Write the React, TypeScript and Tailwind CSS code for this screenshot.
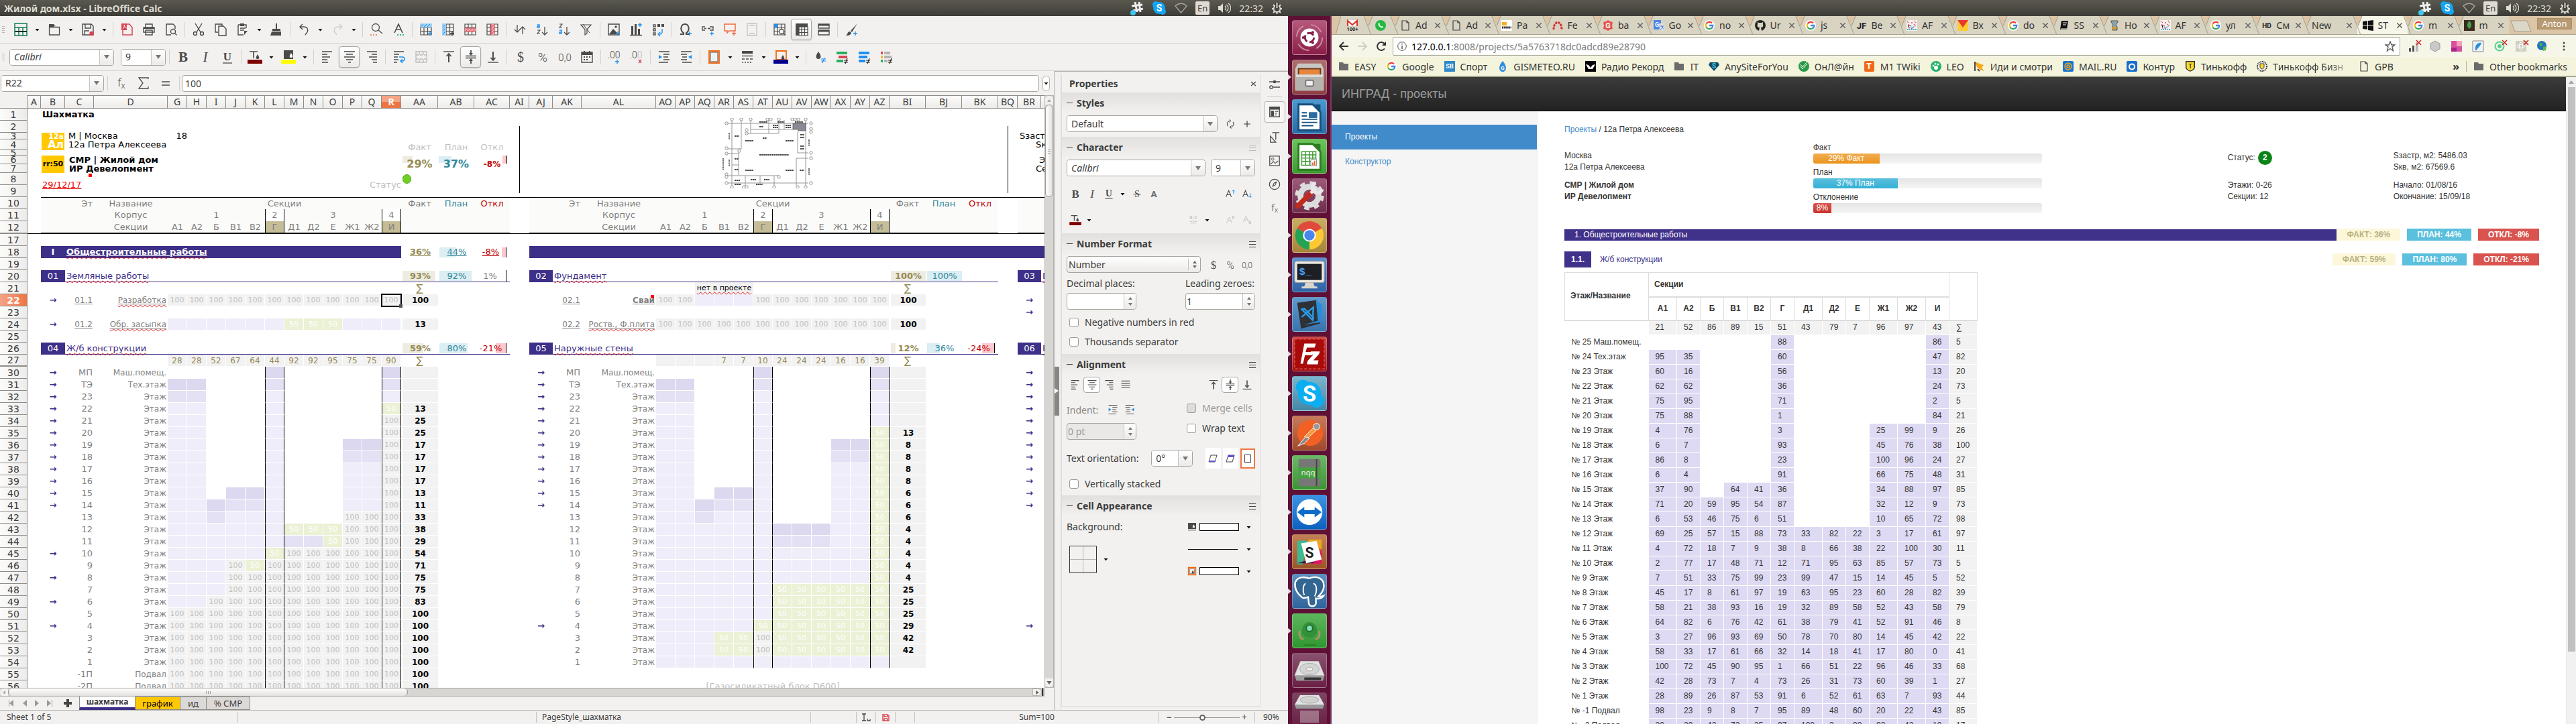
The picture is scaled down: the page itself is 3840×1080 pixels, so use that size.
import React from 'react';
import type { ReactNode } from 'react';

/* ---------- small drawing helpers ---------- */
const INK = '#4a4a4a';
const L = (d: string, c = INK, w = 1.4) => <path d={d} fill="none" stroke={c} strokeWidth={w} />;
const F = (d: string, c = INK) => <path d={d} fill={c} />;
const Svg = ({ s = 20, children, vb = '0 0 20 20' }: { s?: number; children: ReactNode; vb?: string }) => (
  <svg width={s} height={s} viewBox={vb} className="block shrink-0 overflow-visible" aria-hidden="true">{children}</svg>
);
const Plus = ({ x = 13, y = 13, c = '#1e90f0' }) => L(`M${x + 3} ${y}v6M${x} ${y + 3}h6`, c, 1.4);
const Down = () => (
  <svg width="7" height="5" viewBox="0 0 7 5" className="block shrink-0" aria-hidden="true"><path d="M0.5 1h6l-3 3.5z" fill="#111" /></svg>
);
const Caret = () => (
  <svg width="8" height="6" viewBox="0 0 8 6" className="block" aria-hidden="true"><path d="M0 0h8l-4 6z" fill="#777" /></svg>
);

const grid = (c = INK) => L('M2 2h16v16H2zM2 7h16M2 12.500h16M7 2v16M12.500 2v16', c, 1.2);

const icons: Record<string, ReactNode> = {
  calc: <>{L('M1 1h18v18H1zM1 7h18M1 13h18M7 7v12M13 7v12', '#107c54', 1.5)}{L('M1 13h18', '#111', 1.5)}</>,
  open: <>{F('M2 2h7l2 3H2z')}{L('M2.500 4v14h15V6.500H2', INK, 1.3)}{F('M2 6h7l3-2H2z')}</>,
  save: <>{L('M2 2h13l3 3v13H2z')}{L('M6 2v6h8V2M5 18v-6h7', INK, 1.3)}<circle cx="15.500" cy="16" r="3.200" fill="#e04050" /></>,
  pdf: <>{L('M4 3v15h14V7l-4-5h-5', '#d94452', 1.5)}{F('M2 1h8v10H2z', '#d94452')}{L('M4 9c3-3 3-6 2-6s1 4 4 5', '#fff', 1)}</>,
  print: <>{L('M5 7V2h10v5M2 7h16v7H2zM5 11h10v7H5zM7 14h6')}{F('M2 7h16v2H2z')}</>,
  preview: <>{L('M10 18H3V2h10l3 3v4')}<circle cx="13" cy="13" r="3.500" fill="none" stroke={INK} strokeWidth="1.400" />{L('M15.500 15.500l3 3')}</>,
  cut: <>{L('M5 1l8 13M15 1L7 14')}<circle cx="5" cy="16" r="2.500" fill="none" stroke={INK} strokeWidth="1.400" /><circle cx="15" cy="16" r="2.500" fill="none" stroke={INK} strokeWidth="1.400" /></>,
  copy: <>{L('M6 14H2V2h10v3')}{L('M7 5h7l4 4v10H7z')}</>,
  paste: <>{L('M3 3h12v5M3 3v15h8')}{F('M6 1h6v4H6z')}{L('M6 8h8M6 11h6', INK)}{F('M12 12l5 0-5 6z')}</>,
  brush: <>{F('M9 1h2v8H9zM4 9h12v3H4zM3 13h14v6H1z')}</>,
  undo: <>{L('M8 2L4 6l4 4M4 6h6c5 0 7 4 5 8l-3 4')}</>,
  redo: <>{L('M13 2l4 4-4 4M17 6h-6c-5 0-7 4-5 8l3 4', '#cfcecb')}</>,
  find: <><circle cx="9" cy="7" r="5.500" fill="none" stroke={INK} strokeWidth="1.300" />{L('M13 11l6 5')}{L('M1 18h2M5 18h2M9 18h2', '#ef8672', 2)}</>,
  spell: <>{L('M4 15L10 2l6 13M6 10h8', INK, 1.600)}{L('M8 18h2M12 18h2M16 18h2', '#33b56b', 2)}</>,
  insRow: <>{grid()}{F('M1 1h18v6H1z', '#9fd0f5')}{L('M2 6l4-4M7 6l4-4M12 6l4-4', '#1e90f0', 1)}<Plus /></>,
  insCol: <>{grid()}{F('M1 1h6v18H1z', '#9fd0f5')}{L('M2 7l4-4M2 12l4-4M2 17l4-4', '#1e90f0', 1)}{L('M16 13v6M13 16h6', '#333')}</>,
  delRow: <>{grid()}{F('M2 8h16v5H2z', '#f3a4ab')}{L('M3 13l4-4M8 13l4-4M13 13l4-4M2 8h16M2 13h16', '#d94452', 1)}</>,
  delCol: <>{grid()}{F('M8 2h5v16H8z', '#f3a4ab')}{L('M8 7l4-4M8 12l4-4M8 17l4-4M8 2v16M13 2v16', '#d94452', 1)}</>,
  sort: <>{L('M6 3v11M2 10l4 4 4-4M14 17V6M10 10l4-4 4 4', INK, 1.300)}</>,
  az: <>{L('M14 6v12M10 14l4 4 4-4', INK, 1.300)}{L('M3 3h3v4H3V5h3', '#1e90f0', 1.400)}{L('M3 11h4l-4 5h4', INK, 1.200)}</>,
  za: <>{L('M14 6v12M10 14l4 4 4-4', INK, 1.300)}{L('M3 2h4L3 7h4', INK, 1.200)}{L('M3 11h3v5H3v-2h3', '#1e90f0', 1.400)}</>,
  filter: <>{L('M2 3h15l-6 7v6l-3 2v-8z', INK, 1.200)}{L('M5 2l10 13', INK, 1)}</>,
  image: <>{L('M2 2h16v16H2z')}{F('M3 17l6-8 4 4 4 4z')}<circle cx="13" cy="6" r="1.700" fill={INK} /><Plus /></>,
  chart: <>{F('M3 5h3v13H3zM8 2h3v16H8zM13 9h3v9h-3z')}{L('M1 18.500h18', INK)}<Plus y={0} /></>,
  pivot: <>{L('M3 3h3v3H3zM3 9h3v3H3zM3 15h3v3H3z', INK, 1.300)}{F('M9 2h4v4H9zM15 2h4v4h-4z')}{L('M16 9v5c0 2-2 3-5 3M13 14l-3 3 3 3', '#1e90f0')}</>,
  omega: <>{L('M2 17h5v-2C1 11 3 2 9 2s8 9 2 13v2h5', INK, 2)}<Plus /></>,
  link: <>{L('M6 6H2v5h4M5 8.500h3M10 8.500h2M13 6h5v5h-5M14 8.500h-2', INK, 1.300)}<Plus /></>,
  comment: <>{L('M2 2h16v10h-9l-3 3v-3H2z', '#ef6a3d', 1.500)}<Plus c="#ef6a3d" /></>,
  header: <>{L('M3 1h14v18H3zM6 4h8M6 16h8', '#c4c3c1', 1.300)}</>,
  freeze: <>{grid()}{F('M2 2h5v5H2z', '#1e90f0')}<circle cx="13" cy="13" r="3.500" fill="#f2f1ef" stroke={INK} strokeWidth="1.300" />{L('M15.500 15.500l3 3')}</>,
  rowcol: <>{F('M1 1h18v5H1zM1 1h5v18H1z')}{L('M6 6h13v13H6zM6 10h13M6 14.500h13M10 6v13M14.500 6v13', INK, 1.200)}</>,
  split: <>{L('M2 2h16v6H2zM2 11h16v7H2z')}{F('M2 2h16v2.500H2zM2 11h16v2.500H2z')}</>,
  draw: <>{F('M19 1L9 12l2 2zM8 13l2 2c-1 4-5 4-8 4 3-2 2-6 6-6z')}<Plus /></>,
  bold: <text x="10" y="17" textAnchor="middle" fontFamily="Liberation Serif" fontWeight="700" fontSize="21" fill={INK}>B</text>,
  italic: <text x="10" y="17" textAnchor="middle" fontFamily="Liberation Serif" fontStyle="italic" fontSize="21" fill={INK}>I</text>,
  under: <><text x="10" y="15" textAnchor="middle" fontFamily="Liberation Serif" fontSize="17" fontWeight="700" fill={INK}>U</text>{L('M3 19h14', INK, 1.300)}</>,
  fcolor: <>{L('M2 2h12M8 2v10', INK, 1.600)}{F('M14 6c4 6 2 7 0 7s-4-1 0-7z')}{F('M-1 14h22v6H-1z', '#7f0000')}</>,
  hcolor: <>{F('M3 0h14v13H3z')}{F('M14 4c4 6 2 7 0 7s-4-1 0-7z', '#fff')}{F('M-1 14h22v6H-1z', '#ffff00')}</>,
  fill: <>{F('M0 0h20v15H0z')}{F('M14 4c5 7 2 8 0 8s-5-1 0-8z', '#fff')}{L('M0 18h20', INK, 1.600)}</>,
  frame: <>{L('M1 1h18v18H1z', '#f0690f', 2.600)}{L('M4 4h12v12H4z', INK, 1)}{F('M12 8c5 7 2 8 0 8s-5-1 0-8z')}</>,
  al: L('M2 2h15M2 6h8M2 10h12M2 14h8M2 18h9', INK, 1.400),
  ac: L('M2 2h16M5 6h10M2 10h16M5 14h10M8 18h4', INK, 1.400),
  ar: L('M3 2h15M10 6h8M6 10h12M10 14h8M12 18h6', INK, 1.400),
  aj: L('M2 3h16M2 7h16M2 11h16M2 15h16', INK, 1.400),
  wrap: <>{L('M2 2h15M2 6h8M2 10h6M2 14h7M2 18h5')}{L('M10 10h5c4 0 4 6 0 6h-3M15 13l-3 3 3 3', '#1e90f0')}</>,
  merge: L('M2 2h16v16H2zM2 7h4M8 7h4M14 7h4M2 13h4M8 13h4M14 13h4M7 2v5M13 2v5M7 13v5M13 13v5', '#bdbcba', 1.300),
  vt: <>{L('M2 2h16')}{L('M10 18V6', INK, 2)}{L('M6.500 9L10 5l3.500 4', INK, 1.800)}</>,
  vm: <>{L('M2 8.500h16M2 11.500h16')}{L('M10 0v6M10 20v-6', INK, 1.800)}{F('M7 4h6l-3 4zM7 16h6l-3-4z')}</>,
  vb: <>{L('M2 18h16')}{L('M10 2v12', INK, 2)}{L('M6.500 11L10 15l3.500-4', INK, 1.800)}</>,
  dollar: <text x="10" y="17" textAnchor="middle" fontFamily="Liberation Serif" fontSize="20" fill={INK}>$</text>,
  pct: <text x="10" y="17" textAnchor="middle" fontFamily="Roboto" fontWeight="300" fontSize="19" fill={INK}>%</text>,
  n00: <text x="10" y="16" textAnchor="middle" fontFamily="Roboto" fontWeight="300" fontSize="15" fill={INK}>0,0</text>,
  date: <>{L('M2 3h16v15H2z')}{F('M2 3h16v4H2zM5 1h2v3H5zM13 1h2v3h-2zM5 9h2v2H5zM9 9h2v2H9zM13 9h2v2h-2zM5 13h2v2H5zM9 13h2v2H9z')}</>,
  dadd: <><text x="9" y="12" textAnchor="middle" fontFamily="Roboto" fontWeight="300" fontSize="14" fill={INK}>.00</text><Plus x={11} y={14} /></>,
  ddel: <><text x="9" y="12" textAnchor="middle" fontFamily="Roboto" fontWeight="300" fontSize="14" fill={INK}>.0<tspan fill="#bbb">0</tspan></text>{L('M13 14l4 5M17 14l-4 5', '#d94452', 1.400)}</>,
  ind: <>{L('M2 2h16M9 6h9M9 10h7M9 14h9M2 18h14', INK, 1.300)}{F('M2 7v6l5-3z', '#1e90f0')}</>,
  outd: <>{L('M2 2h16M2 6h9M4 10h7M2 14h9M4 18h14', INK, 1.300)}{F('M18 7v6l-5-3z', '#1e90f0')}</>,
  border: <>{L('M3 1h15v18H3z', '#f0690f', 1.800)}{L('M5 3h11v14H5z', INK, 1)}</>,
  lstyle: <>{F('M2 1h16v4H2z')}{L('M2 8.500h16')}<path d="M2 13h16" stroke={INK} strokeWidth="1.500" strokeDasharray="4 2" /><path d="M2 18h16" stroke={INK} strokeWidth="1.500" strokeDasharray="2 2" /></>,
  bcolor: <>{L('M3 1h15v13H3z', '#f0690f', 1.800)}{F('M13 7c4 6 2 7 0 7s-4-1 0-7z')}{F('M-1 14h22v6H-1z', '#000090')}</>,
  c1: <>{F('M8 2c6 8 3 11 0 11s-6-3 0-11z')}{L('M12 13h7M12 16h7M17 11l-3 8', '#1e90f0', 1.200)}</>,
  c2: <>{F('M2 2h16v4H2zM2 14h10v4H2z', '#27ae60')}{F('M5 8h13v4H5z', '#d94452')}{L('M13 15h6M13 18h6M18 12l-3 8', '#222', 1.200)}</>,
  c3: <>{F('M2 2h16v4H2zM2 8h13v4H2zM2 14h10v4H2z', '#1e90f0')}{L('M13 15h6M13 18h6M18 12l-3 8', '#222', 1.200)}</>,
  c4: <>{F('M2 2h3v4H2z', '#d94452')}{F('M2 8h3v4H2z', '#f2b53c')}{F('M2 14h3v4H2z', '#27ae60')}{F('M7 2h9v4H7zM7 8h11v4H7zM7 14h5v4H7z', '#b4b3b1')}{L('M13 15h6M13 18h6M18 12l-3 8', '#222', 1.200)}</>,
  fx: <text x="10" y="15" textAnchor="middle" fontFamily="Noto Sans" fontWeight="300" fontSize="17" fill={INK}>f<tspan fontSize="12" dy="3">x</tspan></text>,
  sum: L('M17 4V2H3l6 8-6 8h14v-3', INK, 1.300),
  eq: L('M4 8h12M4 13h12', INK, 1.300),
  strike: <><text x="10" y="16" textAnchor="middle" fontFamily="Liberation Serif" fontSize="18" fill={INK}>S</text>{L('M3 11h14', INK, 1.200)}</>,
  shadow: <text x="10" y="16" textAnchor="middle" fontFamily="Roboto" fontWeight="700" fontSize="17" fill="#6a6a6a">A</text>,
  aup: <>{L('M2 16L7 4l5 12M4 12h6', INK, 1.300)}{L('M16 10V3M13.500 5.500L16 3l2.500 2.500', '#1e90f0', 1.200)}</>,
  adn: <>{L('M2 16L7 4l5 12M4 12h6', INK, 1.300)}{L('M16 9v8M13.500 14.500L16 17l2.500-2.500', '#1e90f0', 1.200)}</>,
  sup: <>{L('M3 16L8 5l5 11M5 12h6', '#c4c3c1', 1.200)}{L('M14 3h3v5h-3zM14 5.500h3', '#c4c3c1', 1)}</>,
  sub: <>{L('M3 14L8 3l5 11M5 10h6', '#c4c3c1', 1.200)}{L('M14 12h3v5h-3zM14 14.500h3', '#c4c3c1', 1)}</>,
  spacing: <>{L('M4 3h3v5H4zM4 5.500h3M13 3h2l1.500 2.500L15 8h-2zM9 6h2', '#c4c3c1', 1.100)}{L('M3 13h5M12 13h5M10 10v8M5 16h3M12 16h3', '#c4c3c1', 1.100)}</>,
  refresh: <>{L('M5 14C2 9 6 4 10 4M15 6c3 5-1 10-5 10', INK, 1.300)}{L('M8 2l3 2-3 3M12 18l-3-2 3-3', INK, 1.200)}</>,
  plus: L('M10 4v12M4 10h12', '#333', 1.400),
  settings: <>{L('M2 6h16M8 14h10', INK, 1.300)}<circle cx="10" cy="6" r="2.300" fill={INK} /><circle cx="5" cy="14" r="2.200" fill="none" stroke={INK} strokeWidth="1.300" /></>,
  props: <>{L('M2 2h16v16H2z', INK, 1.600)}{F('M2 2h16v4H2zM4 8h5v9H4z')}{L('M11 9h5M11 12h3M11 15h2')}</>,
  styles: <>{L('M6 2h12M12 2v12M3 18V8l9 10z', INK, 1.400)}</>,
  gallery: <>{L('M2 2h16v16H2z', INK, 1.400)}<circle cx="7" cy="7" r="2" fill="none" stroke={INK} />{L('M4 15l4-4 3 3 5-4', INK, 1.200)}</>,
  nav: <><circle cx="10" cy="10" r="8.500" fill="none" stroke={INK} strokeWidth="1.400" />{L('M7 13l2-5 4-2-2 5z', INK, 1.300)}</>,
};

const Icon = ({ n, s = 20 }: { n: string; s?: number }) => <Svg s={s}>{icons[n]}</Svg>;

function ToolBtn({ n, on }: { n: string; on?: boolean }) {
  return (
    <button
      aria-label={n}
      className={
        'flex shrink-0 items-center justify-center ' +
        (on ? 'mx-px h-8 w-[31px] rounded border border-[#a9a7a3] bg-gradient-to-b from-white to-[#eceae8] shadow-sm' : 'h-8 w-[33px]')
      }
    >
      <Icon n={n} />
    </button>
  );
}
const Drop = () => <button aria-label="more" className="flex h-8 w-[17px] shrink-0 items-center justify-center"><Down /></button>;
const MiniDrop = () => <button aria-label="more" className="flex h-6 w-[17px] shrink-0 items-center justify-center"><Down /></button>;
const Sep = () => <span className="flex w-2 shrink-0 justify-center"><span className="h-[22px] w-px bg-[#d3d1ce]" /></span>;
const Grip = () => (
  <span className="flex w-[14px] shrink-0 flex-col gap-[2px] pl-[3px]">
    {[0, 1, 2, 3].map((i) => <span key={i} className="h-px w-[4px] bg-[#b8b6b2]" />)}
  </span>
);
/* '!' marks a pressed button, 'v' a drop-down arrow, '|' a divider */
function Tools({ list }: { list: string }) {
  return (
    <>
      {list.split(' ').map((t, i) =>
        t === '|' ? <Sep key={i} /> : t === 'v' ? <Drop key={i} /> : <ToolBtn key={i} n={t.replace('!', '')} on={t.startsWith('!')} />,
      )}
    </>
  );
}

const fieldBox = 'flex items-stretch overflow-hidden rounded-[4px] border border-[#a8a5a1] bg-white text-[14px] text-[#3c3c3c]';

function Combo({ value, label, className, italic }: { value: string; label: string; className: string; italic?: boolean }) {
  return (
    <div className={fieldBox + ' h-[25px] ' + className}>
      <select aria-label={label} className={'min-w-0 flex-1 appearance-none bg-white px-[6px] leading-none outline-none ' + (italic ? 'italic' : '')}>
        <option>{value}</option>
      </select>
      <span className="flex w-[21px] items-center justify-center border-l border-[#c6c3bf] bg-gradient-to-b from-white to-[#eceae8]"><Caret /></span>
    </div>
  );
}

function Spin({ value, label, disabled }: { value: string; label: string; disabled?: boolean }) {
  return (
    <div className={'flex h-[25px] w-[104px] items-stretch overflow-hidden rounded-[4px] border border-[#a8a5a1] text-[14px] text-[#3c3c3c] ' + (disabled ? 'bg-[#e9e8e6]' : 'bg-white')}>
      <input aria-label={label} defaultValue={value} disabled={disabled} className={'min-w-0 flex-1 bg-transparent pl-px leading-none outline-none ' + (disabled ? 'text-[#9a9896]' : '')} />
      <span className="flex w-[18px] flex-col items-center justify-center gap-[5px] border-l border-[#c6c3bf] bg-gradient-to-b from-white to-[#eceae8]">
        <svg width="6" height="4" viewBox="0 0 6 4" aria-hidden="true"><path d="M0 4h6L3 0z" fill="#777" /></svg>
        <svg width="6" height="4" viewBox="0 0 6 4" aria-hidden="true"><path d="M0 0h6L3 4z" fill="#777" /></svg>
      </span>
    </div>
  );
}

/* ---------- system bar ---------- */
function Tray() {
  return (
    <div className="flex items-center gap-[12px] text-[#dfdbd2]">
      <svg width="20" height="22" viewBox="0 0 20 22" aria-hidden="true">
        <path d="M7 2l3 15M13 2l2 15M2 8l16-2M4 15l15-3" stroke="#eee" strokeWidth="3" fill="none" />
        <circle cx="4" cy="18" r="4" fill="#3cc8ee" />
      </svg>
      <svg width="22" height="22" viewBox="0 0 22 22" aria-hidden="true">
        <circle cx="11" cy="11" r="9" fill="#12a5f4" /><circle cx="6" cy="6" r="5" fill="#12a5f4" /><circle cx="16" cy="16" r="5" fill="#12a5f4" />
        <text x="11" y="16" textAnchor="middle" fontFamily="Roboto" fontWeight="700" fontSize="14" fill="#fff">S</text>
      </svg>
      <svg width="19" height="16" viewBox="0 0 19 16" aria-hidden="true"><path d="M1 5c5-5 12-5 17 0L9.500 15z" fill="none" stroke="#a8a59c" strokeWidth="1.400" /></svg>
      <span className="rounded-[2px] bg-[#dfdbd2] px-[3px] text-[13px] leading-[20px] text-[#3c3b37]">En</span>
      <svg width="20" height="16" viewBox="0 0 20 16" aria-hidden="true">
        <path d="M1 5h3l4-4v14l-4-4H1z" fill="#dfdbd2" /><path d="M11 5c2 2 2 4 0 6M13 3c4 3 4 7 0 10M16 1c5 4 5 10 0 14" fill="none" stroke="#dfdbd2" strokeWidth="1.300" />
      </svg>
      <time className="text-[14px]">22:32</time>
      <svg width="17" height="18" viewBox="0 0 17 18" aria-hidden="true">
        <circle cx="8.500" cy="10" r="5" fill="none" stroke="#dfdbd2" strokeWidth="2" />
        <path d="M8.500 1v8" stroke="#3c3b37" strokeWidth="5" /><path d="M8.500 1v8M1 10h2M14 10h2M3 4l2 2M14 4l-2 2M3 16l2-2M14 16l-2-2M8.500 15v3" stroke="#dfdbd2" strokeWidth="2" />
      </svg>
    </div>
  );
}
function SystemBar({ title }: { title?: string }) {
  return (
    <header className="flex h-6 shrink-0 items-center justify-between bg-gradient-to-b from-[#5b594f] to-[#3d3c37] pl-[6px] pr-[8px]">
      <h1 className="whitespace-nowrap text-[14px] font-bold text-[#dfdbd2]">{title}</h1>
      <Tray />
    </header>
  );
}

/* ---------- spreadsheet ---------- */
const C12 = [29, 29, 29, 29, 29, 29, 29, 29, 29, 29, 29, 29];
const COLS: [string, number][] = [];
const addCols = (names: string, widths: number[]) => names.split(' ').forEach((n, i) => COLS.push([n, widths[i]]));
addCols('A', [20]);
addCols('B C D', [36, 43, 110]);
addCols('G H I J K L M N O P Q R', C12);
addCols('AA AB AC', [55, 54, 53]);
addCols('AI', [29]);
addCols('AJ AK AL', [35, 43, 111]);
addCols('AO AP AQ AR AS AT AU AV AW AX AY AZ', C12);
addCols('BI BJ BK', [54, 54, 54]);
addCols('BQ BR', [29, 35]);
COLS.push(['', 60]);

const TINT: Record<string, string> = {
  d: 'border-r border-b border-white bg-[#dcd8f0]',
  m: 'border-r border-b border-white bg-[#e4e1f4]',
  l: 'border-r border-b border-white bg-[#efedf9]',
  '5': 'border-r border-b border-white bg-[#ebf1d5] text-white',
  '1': 'border-r border-b border-white bg-[#f2f2f2] text-[#bfbfbf]',
  '.': '',
};
function cells(code: string, lines: boolean, selected = -1) {
  return code.split('').map((c, i) => (
    <td
      key={i}
      className={
        'text-center text-[11px] ' + TINT[c] + (lines && (i === 5 || i === 11) ? ' border-x border-x-black' : '') +
        (i === selected ? ' relative outline-2 -outline-offset-1 outline-black' : '')
      }
    >
      {c === '5' ? '50' : c === '1' ? '100' : ''}
      {i === selected && <span className="absolute -bottom-[3px] -right-[3px] h-[5px] w-[5px] bg-[#555]" />}
    </td>
  ));
}
const Blank = ({ n = 1, className = '' }: { n?: number; className?: string }) => (n > 0 ? <td colSpan={n} className={className} /> : null);
const Arrow = ({ on }: { on?: boolean }) => <td className="text-center text-[13px] font-bold text-[#3d3089]">{on ? '→' : ''}</td>;
const SumCell = ({ v }: { v: string }) => <td className="border-b border-l-2 border-white bg-[#f2f2f2] text-center text-[12px] font-bold text-black">{v}</td>;
const Sigma = () => <td className="text-center text-[15px] text-[#948a54]">∑</td>;

function Bar({ v, kind, w, u }: { v: string; kind: 'fact' | 'plan' | 'off'; w: number; u?: boolean }) {
  const fill = kind === 'fact' ? '#eeece1' : kind === 'plan' ? '#daeef3' : '#ffc7ce';
  const look = kind === 'fact' ? 'font-bold text-[#948a54]' : kind === 'plan' ? 'text-[#31869b]' : 'text-[#c00000] mr-[5px] border-r border-black';
  return (
    <div
      className={'ml-[2px] flex h-[15px] items-center justify-center text-[13px] ' + look + (u ? ' underline' : '')}
      style={{ backgroundImage: `linear-gradient(${kind === 'off' ? 270 : 90}deg, ${fill} ${w}%, transparent ${w}%)` }}
    >
      {v}
    </div>
  );
}

const wavy = 'underline decoration-wavy decoration-[#e02020] decoration-1 underline-offset-[2px]';
const rule = 'border-b border-[#3d3089]';

function SectionTitle({ no, name, fact, plan, off }: { no: string; name: string; fact: ReactNode; plan: ReactNode; off: ReactNode }) {
  return (
    <>
      <td className="bg-[#3d3089] text-center text-[13px] text-white">{no}</td>
      <td colSpan={14} className={rule + ' pl-[2px] text-[13px] text-[#3d3089]'}><span className={wavy}>{name}</span></td>
      <td className={rule}>{fact}</td>
      <td className={rule}>{plan}</td>
      <td className={rule}>{off}</td>
    </>
  );
}
function WorkRow({ arrow, no, name, code, sum, selected, bold }: { arrow?: boolean; no: string; name: string; code: string; sum: string; selected?: number; bold?: boolean }) {
  return (
    <>
      <Arrow on={arrow} />
      <td className="pr-[2px] text-right text-[12px] text-[#808080] underline">{no}</td>
      <td className={'pr-[2px] text-right text-[12px] text-[#808080] underline ' + (bold ? 'bg-[linear-gradient(#f00,#f00)] bg-[length:5px_5px] bg-[position:103px_1px] bg-no-repeat font-bold' : '')}>
        {bold ? name : <span className={wavy}>{name}</span>}
      </td>
      {cells(code, false, selected)}
      <SumCell v={sum} />
      <Blank n={2} />
    </>
  );
}
function Totals({ v }: { v: string[] }) {
  return (
    <>
      <Blank n={3} />
      {v.map((x, i) => <td key={i} className="border-r border-b border-white bg-[#f2f2f2] text-center text-[12px] text-[#948a54]">{x}</td>)}
      <Sigma />
      <Blank n={2} />
    </>
  );
}
function FloorRow({ arrow, floor, name, code, sum }: { arrow: boolean; floor: string; name: string; code: string; sum: string }) {
  return (
    <>
      <Arrow on={arrow} />
      <td className="pr-[2px] text-right text-[13px] text-[#808080]">{floor}</td>
      <td className="pr-[2px] text-right text-[12px] text-[#808080]">{name}</td>
      {cells(code, true)}
      <SumCell v={sum} />
      <Blank n={2} />
    </>
  );
}

const ONES = '111111111111';
const BLOCK1: [string, string][] = [
  ['.....d.....d', ''], ['dd...m.....m', ''], ['mm...l.....l', ''], ['ll...l.....5', '13'], ['ll...l.....1', '25'], ['ll...l.....1', '25'],
  ['ll...l...dd1', '17'], ['ll...l...mm1', '17'], ['ll...l...ll1', '17'], ['ll...l...ll1', '17'], ['ll.ddl...ll1', '13'], ['lldmml...ll1', '11'],
  ['llmlll...111', '33'], ['llllll555111', '38'], ['llllllmm5111', '29'], ['lllll5111111', '54'], ['lll151111111', '71'], ['lll111111111', '75'],
  ['lll111111111', '75'], ['ll1111111111', '83'], [ONES, '100'], [ONES, '100'], [ONES, '100'], [ONES, '100'], [ONES, '100'], [ONES, '100'], [ONES, '100'],
];
const BLOCK2: [string, string][] = [
  ['.....d.....d', ''], ['dd...m.....m', ''], ['mm...l.....l', ''], ['ll...l.....l', ''], ['ll...l.....l', ''], ['ll...l.....5', '13'],
  ['ll...l...dd5', '8'], ['ll...l...mm5', '8'], ['ll...l...ll5', '8'], ['ll...l...ll5', '8'], ['ll.ddl...ll5', '6'], ['lldmml...ll5', '6'],
  ['llmlll...ll5', '6'], ['lllllldddll5', '4'], ['llllllmmmll5', '4'], ['lllllllllll5', '4'], ['lllllllllll5', '4'], ['lllllllllll5', '4'],
  ['llllll555555', '25'], ['llllll555555', '25'], ['llllll555555', '25'], ['lllll5555555', '29'], ['lll551555555', '42'], ['lll551555555', '42'], ['llllllllllll', ''],
];
const SECT = ['А1', 'А2', 'Б', 'В1', 'В2', 'Г', 'Д1', 'Д2', 'Е', 'Ж1', 'Ж2', 'И'];

function RowHead({ n, sel, thick }: { n: number; sel?: boolean; thick?: boolean }) {
  return (
    <th
      scope="row"
      className={
        'border-r border-[#8e8c89] text-center text-[14px] ' + (thick ? 'border-b-2 ' : 'border-b ') +
        (sel ? 'bg-gradient-to-r from-[#f5a385] to-[#ee7543] font-bold text-white' : 'bg-gradient-to-r from-[#fbfbfa] to-[#edecea] font-normal text-[#3c3c3c]')
      }
    >
      {n}
    </th>
  );
}

function FloorPlan() {
  const ring = (x: number, y: number) => <circle key={x + '-' + y} cx={x} cy={y} r="2.200" fill="#fff" stroke="#777" strokeWidth="0.800" />;
  const tag = (x: number, y: number, w: number) => <path key={`t${x}-${y}`} d={`M${x} ${y}h${w}`} stroke="#444" strokeWidth="1.800" strokeDasharray="2.500 0.600" />;
  return (
    <svg width="136" height="105" viewBox="0 0 136 105" className="ml-[99px] block" aria-label="План корпусов">
      <g fill="none" stroke="#8a8a8a" strokeWidth="0.900">
        <path d="M6 8h122M14 3v98M28 3v43H6M42 3v20M42 17h28M36 23h48M69 3v20M84 3v20M69 17h37M92 3v14M124 3v98M112 20v32h16M6 53h18v32M24 70H14M6 86h78M34 86v15M56 86v11M77 86v15M110 101V60h18M6 97h122M24 49v4" />
      </g>
      <path d="M105 8h19v11h-11v-2h-8z" fill="#8a8a94" stroke="#555" strokeWidth="0.800" />
      {[[14, 2], [28, 2], [42, 2], [67, 2], [72, 2], [84, 2], [104, 2], [108, 2], [113, 2], [124, 2], [6, 8], [6, 45], [6, 53], [6, 84], [6, 88], [6, 97], [36, 18], [36, 23], [132, 8], [132, 16], [132, 21], [132, 52], [132, 60], [132, 97], [14, 103], [32, 103], [36, 103], [77, 103], [112, 103], [124, 103], [84, 88], [25, 49]].map(([x, y]) => ring(x, y))}
      {[[55, 6, 12], [82, 6, 10], [108, 6, 12], [55, 13, 6], [75, 11, 8], [75, 14, 8], [94, 11, 8], [94, 14, 8], [18, 27, 7], [60, 30, 6], [34, 34, 12], [94, 34, 12], [55, 55, 44], [34, 78, 12], [94, 78, 12], [18, 61, 6], [18, 77, 6], [18, 93, 8], [42, 92, 8], [62, 92, 8], [116, 25, 6], [116, 29, 6], [116, 42, 6], [116, 46, 6], [115, 78, 7], [18, 99, 10], [50, 99, 10]].map(([x, y, w]) => tag(x, y, w))}
      <path d="M1 60v18M10 62v10M10 22v10M129 32v10M129 75v10" stroke="#444" strokeWidth="1.500" strokeDasharray="2 0.600" />
    </svg>
  );
}

function HeadPair({ kind }: { kind: 1 | 2 }) {
  const bg = 'bg-[#fbfbf9] ';
  if (kind === 1)
    return (
      <>
        <td className={bg + 'border-t border-black'} />
        <td className={bg + 'border-t border-black pr-[2px] text-right text-[13px] text-[#808080]'}>Эт</td>
        <td className={bg + 'border-t border-black text-center text-[13px] text-[#808080]'}>Название</td>
        <td colSpan={12} className={bg + 'border-t border-black text-center text-[13px] text-[#808080]'}>Секции</td>
        <td className={bg + 'border-t border-black text-center text-[13px] text-[#808080]'}>Факт</td>
        <td className={bg + 'border-t border-black text-center text-[13px] text-[#31869b]'}>План</td>
        <td className={bg + 'border-t border-black text-center text-[13px] text-[#c00000]'}>Откл</td>
      </>
    );
  return (
    <>
      <Blank n={2} className={bg} />
      <td className={bg + 'text-center text-[13px] text-[#808080]'}>Корпус</td>
      <td colSpan={5} className={bg + 'text-center text-[13px] text-[#808080]'}>1</td>
      <td className="border-x border-black text-center text-[13px] text-[#808080]">2</td>
      <td colSpan={5} className={bg + 'text-center text-[13px] text-[#808080]'}>3</td>
      <td className="border-x border-black text-center text-[13px] text-[#808080]">4</td>
      <Blank n={3} className={bg} />
    </>
  );
}
function SectionNames() {
  const b = 'border-b-2 border-b-black ';
  return (
    <>
      <Blank n={2} className={b + 'bg-[#fbfbf9]'} />
      <td className={b + 'bg-[#fbfbf9] text-center text-[13px] text-[#808080]'}>Секции</td>
      {SECT.map((s, i) => (
        <td key={s} className={b + 'text-center text-[13px] text-[#808080] ' + (i === 5 || i === 11 ? 'border-x border-x-black bg-[#c4bd97]' : 'bg-[#fbfbf9]')}>{s}</td>
      ))}
      <Blank n={3} className={b + 'bg-[#fbfbf9]'} />
    </>
  );
}

const topLine = 'border-t border-black';

function Sheet() {
  const floorName = (i: number) => (i === 0 ? 'Маш.помещ.' : i === 1 ? 'Тех.этаж' : i < 25 ? 'Этаж' : 'Подвал');
  const floorNo = (i: number) => (i === 0 ? 'МП' : i === 1 ? 'ТЭ' : i < 25 ? String(25 - i) : `-${i - 24}П`);
  return (
    <table className="w-[1612px] table-fixed border-separate border-spacing-0 whitespace-nowrap bg-white font-['DejaVu_Sans',sans-serif] leading-[0px] text-black">
      <colgroup>
        <col className="w-[41px]" />
        {COLS.map(([, w], i) => <col key={i} style={{ width: w }} />)}
      </colgroup>
      <thead>
        <tr className="h-[20px] font-['Noto_Sans',sans-serif]">
          <th className="border-b border-r border-[#8e8c89] bg-[#f2f1ef]" />
          {COLS.map(([n], i) => (
            <th
              key={i}
              scope="col"
              className={
                'border-b border-r border-t border-[#8e8c89] p-0 text-center text-[14px] ' +
                (n === 'R' ? 'bg-gradient-to-b from-[#f5a385] from-50% to-[#ee7543] to-50% font-bold text-white' : 'bg-gradient-to-b from-[#fbfbfa] to-[#edecea] font-normal text-[#3c3c3c]')
              }
            >
              {n}
            </th>
          ))}
        </tr>
      </thead>
      <tbody>
        <tr className="h-[18px]">
          <RowHead n={1} /><Blank />
          <td colSpan={2} className="overflow-hidden pl-[2px] text-[13px] font-bold">Шахматка</td>
          <Blank n={17} />
          <td colSpan={3} rowSpan={9} />
          <td colSpan={12} rowSpan={9}><FloorPlan /></td>
          <Blank n={5} />
        </tr>
        <tr className="h-[18px]">
          <RowHead n={2} /><Blank n={19} />
          <td rowSpan={8} className="pb-[6px]"><div className="mx-auto mt-[8px] h-[100px] w-px bg-black" /></td>
          <Blank n={3} />
          <td rowSpan={8} className="pb-[6px]"><div className="mx-auto mt-[8px] h-[100px] w-px bg-black" /></td>
          <Blank />
        </tr>
        <tr className="h-[10px]">
          <RowHead n={3} /><Blank />
          <td rowSpan={2} className="border-x border-white bg-[#ffc800] pr-[1px] text-right font-bold text-white">
            <div className="text-[11px] leading-[9px]">12а</div><div className="text-[16px] leading-[15px]">Ал</div>
          </td>
          <td colSpan={2} className="pl-[5px] text-[13px]">М | Москва</td>
          <td className="text-right text-[13px]">18</td>
          <Blank n={14} /><Blank n={3} />
          <td colSpan={2} className="pl-[3px] text-[13px]">Sзастр, м2:</td>
        </tr>
        <tr className="h-[16px]">
          <RowHead n={4} /><Blank />
          <td colSpan={2} className="pl-[5px] text-[13px]">12а Петра Алексеева</td>
          <Blank n={12} />
          <td rowSpan={2} className="text-center text-[13px] text-[#bfbfbf]">Факт</td>
          <td rowSpan={2} className="text-center text-[13px] text-[#bfbfbf]">План</td>
          <td rowSpan={2} className="text-center text-[13px] text-[#bfbfbf]">Откл</td>
          <Blank n={3} />
          <td colSpan={2} className="pl-[27px] text-[13px]">Sкв, м2:</td>
        </tr>
        <tr className="h-[8px]">
          <RowHead n={5} /><Blank n={16} /><Blank n={5} />
        </tr>
        <tr className="h-[13px]">
          <RowHead n={6} /><Blank />
          <td rowSpan={2} className="overflow-hidden border-x border-white bg-[#ffc800] text-center text-[11px] font-bold">rr:50</td>
          <td colSpan={2} className="pl-[6px] text-[13px] font-bold">СМР | Жилой дом</td>
          <Blank n={12} />
          <td rowSpan={2} className="bg-[linear-gradient(#eeece1,#eeece1)] bg-[length:15px_10px] bg-[position:2px_1px] bg-no-repeat text-center text-[16px] font-bold text-[#948a54]">29%</td>
          <td rowSpan={2} className="bg-[linear-gradient(#daeef3,#daeef3)] bg-[length:19px_10px] bg-[position:1px_1px] bg-no-repeat text-center text-[16px] font-bold text-[#31869b]">37%</td>
          <td rowSpan={2} className="bg-[linear-gradient(270deg,#000_1px,#ffc7ce_1px)] bg-[length:7px_12px] bg-[position:42px_0px] bg-no-repeat text-center text-[12px] font-bold text-[#c00000]">-8%</td>
          <Blank n={3} />
          <td colSpan={2} className="pl-[32px] text-[13px]">Этажи:</td>
        </tr>
        <tr className="h-[13px]">
          <RowHead n={7} /><Blank />
          <td colSpan={2} className="pl-[6px] text-[13px] font-bold">ИР Девелопмент</td>
          <Blank n={12} /><Blank n={3} />
          <td colSpan={2} className="pl-[27px] text-[13px]">Секции:</td>
        </tr>
        <tr className="h-[18px]">
          <RowHead n={8} /><Blank />
          <td colSpan={2} rowSpan={2} className="bg-[linear-gradient(#f00,#f00)] bg-[length:5px_5px] bg-[position:71px_1px] bg-no-repeat pl-[2px] text-[13px] text-[#f00000] underline">29/12/17</td>
          <Blank n={11} />
          <td colSpan={2} rowSpan={2} className="text-right text-[13px] text-[#bfbfbf]">Статус</td>
          <td className="pl-[2px]"><div className="h-[14px] w-[13px] rounded-full border border-[#4fa51c] bg-[#6fd022]" /></td>
          <Blank n={2} /><Blank n={3} /><Blank n={2} />
        </tr>
        <tr className="h-[18px]"><RowHead n={9} /><Blank /><Blank n={11} /><Blank n={3} /><Blank n={3} /><Blank n={2} /></tr>

        <tr className="h-[18px]"><RowHead n={10} /><Blank /><HeadPair kind={1} /><Blank className={topLine} /><HeadPair kind={1} /><Blank className={topLine} /><Blank n={2} className={topLine + ' bg-[#fbfbf9]'} /></tr>
        <tr className="h-[18px]"><RowHead n={11} /><Blank /><HeadPair kind={2} /><Blank /><HeadPair kind={2} /><Blank /><Blank n={2} className="bg-[#fbfbf9]" /></tr>
        <tr className="h-[19px]"><RowHead n={12} thick /><Blank className="border-b border-black" /><SectionNames /><Blank className="border-b border-black" /><SectionNames /><Blank className="border-b border-black" /><Blank n={2} className="border-b-2 border-black bg-[#fbfbf9]" /></tr>
        <tr className="h-[18px]"><RowHead n={17} /><Blank n={41} /></tr>

        <tr className="h-[18px]">
          <RowHead n={18} /><Blank />
          <td className="bg-[#3d3089] text-center text-[13px] font-bold text-white">I</td>
          <td colSpan={14} className="bg-[#3d3089] pl-[2px] text-[13px] font-bold text-white underline"><span className={wavy}>Общестроительные работы</span></td>
          <td><Bar v="36%" kind="fact" w={0} u /></td>
          <td><Bar v="44%" kind="plan" w={46} u /></td>
          <td><Bar v="-8%" kind="off" w={14} u /></td>
          <Blank />
          <td colSpan={21} className="bg-[#3d3089]" />
        </tr>
        <tr className="h-[18px]"><RowHead n={19} /><Blank n={41} /></tr>
        <tr className="h-[18px]">
          <RowHead n={20} /><Blank />
          <SectionTitle no="01" name="Земляные работы" fact={<Bar v="93%" kind="fact" w={93} />} plan={<Bar v="92%" kind="plan" w={92} />} off={<div className="mr-[5px] flex h-[17px] items-center justify-center border-r border-black text-[13px] text-[#808080]">1%</div>} />
          <Blank />
          <SectionTitle no="02" name="Фундамент" fact={<Bar v="100%" kind="fact" w={100} />} plan={<Bar v="100%" kind="plan" w={100} />} off="" />
          <Blank />
          <td className="bg-[#3d3089] text-center text-[13px] text-white">03</td>
          <td className={rule + ' pl-[2px] text-[13px] text-[#3d3089]'}><span className={wavy}>Вн. стены</span></td>
        </tr>
        <tr className="h-[18px]">
          <RowHead n={21} /><Blank n={16} /><Sigma /><Blank n={3} /><Blank n={5} />
          <td colSpan={3} className="bg-[#f2f2f2] text-center text-[11px] text-black"><span className={wavy}>нет в проекте</span></td>
          <Blank n={7} /><Sigma /><Blank n={5} />
        </tr>
        <tr className="h-[18px]">
          <RowHead n={22} sel /><Blank />
          <WorkRow arrow no="01.1" name="Разработка" code={ONES} sum="100" selected={11} /><Blank />
          <WorkRow no="02.1" name="Сваи" code="11lll1111111" sum="100" bold /><Blank /><Arrow on /><Blank />
        </tr>
        <tr className="h-[18px]"><RowHead n={23} /><Blank n={39} /><Arrow on /><Blank /></tr>
        <tr className="h-[18px]">
          <RowHead n={24} /><Blank />
          <WorkRow arrow no="01.2" name="Обр. засыпка" code="llllll555lll" sum="13" /><Blank />
          <WorkRow no="02.2" name="Роств., Ф.плита" code={ONES} sum="100" /><Blank n={3} />
        </tr>
        <tr className="h-[18px]"><RowHead n={25} /><Blank n={41} /></tr>
        <tr className="h-[18px]">
          <RowHead n={26} /><Blank />
          <SectionTitle no="04" name="Ж/б конструкции" fact={<Bar v="59%" kind="fact" w={59} />} plan={<Bar v="80%" kind="plan" w={80} />} off={<Bar v="-21%" kind="off" w={34} />} />
          <Blank />
          <SectionTitle no="05" name="Наружные стены" fact={<Bar v="12%" kind="fact" w={13} />} plan={<Bar v="36%" kind="plan" w={37} />} off={<Bar v="-24%" kind="off" w={40} />} />
          <Blank />
          <td className="bg-[#3d3089] text-center text-[13px] text-white">06</td>
          <td className={rule + ' pl-[2px] text-[13px] text-[#3d3089]'}><span className={wavy}>Внутр.</span></td>
        </tr>
        <tr className="h-[18px]">
          <RowHead n={27} thick /><Blank />
          <Totals v={['28', '28', '52', '67', '64', '44', '92', '92', '95', '75', '75', '90']} /><Blank />
          <Totals v={['', '', '', '7', '7', '10', '24', '24', '24', '16', '16', '39']} /><Blank n={3} />
        </tr>
        {BLOCK1.map(([code, sum], i) => {
          const b2 = BLOCK2[i];
          const early = i < 12;
          return (
            <tr key={i} className="h-[18px]">
              <RowHead n={30 + i} /><Blank />
              <FloorRow arrow={early || [15, 17, 19, 21].includes(i)} floor={floorNo(i)} name={floorName(i)} code={code} sum={sum} />
              <Blank />
              {b2 ? <FloorRow arrow={early || i === 21} floor={floorNo(i)} name={floorName(i)} code={b2[0]} sum={b2[1]} /> : i === 26 ? (
                <><Blank n={3} /><td colSpan={12} className="text-center text-[13px] text-[#bfbfbf]">[Газосиликатный блок D600]</td><Blank n={3} /></>
              ) : <Blank n={18} />}
              <Blank /><Arrow on={early || i === 21} /><Blank />
            </tr>
          );
        })}
      </tbody>
    </table>
  );
}

/* ---------- properties sidebar ---------- */
function Head({ t, menu = true, dim }: { t: string; menu?: boolean; dim?: boolean }) {
  return (
    <div className="flex h-[31px] items-center bg-gradient-to-b from-[#e1e0de] to-[#f2f1ef] pl-[7px] pr-[6px]">
      <span className="mr-[6px] h-px w-[9px] bg-[#444]" />
      <h3 className="flex-1 text-[14px] font-bold text-[#3c3c3c]">{t}</h3>
      {menu && <button aria-label={t + ' options'}><svg width="10" height="10" viewBox="0 0 10 10" aria-hidden="true"><path d="M0 1.500h10M0 5.500h10M0 9.500h10" stroke={dim ? '#bbb' : '#444'} /></svg></button>}
    </div>
  );
}
const Mini = ({ n, on }: { n: string; on?: boolean }) => (
  <button aria-label={n} className={'flex h-6 w-[25px] items-center justify-center ' + (on ? 'rounded border border-[#a9a7a3] bg-white' : '')}><Icon n={n} s={16} /></button>
);
const Check = ({ t, disabled }: { t: string; disabled?: boolean }) => (
  <label className={'flex items-center gap-[9px] text-[14px] ' + (disabled ? 'text-[#9a9896]' : 'text-[#3c3c3c]')}>
    <input type="checkbox" disabled={disabled} className={'h-[14px] w-[14px] appearance-none rounded-[3px] border border-[#9c9a96] ' + (disabled ? 'bg-[#dedddb]' : 'bg-white')} />
    {t}
  </label>
);

function Sidebar() {
  return (
    <aside className="flex min-h-0 w-[349px] shrink-0 border-l border-t border-[#b5b3af]">
      <div className="flex w-[10px] shrink-0 items-center border-r border-[#e0dfdd]">
        <div className="flex h-[73px] w-[7px] items-center bg-[#888683]"><svg width="6" height="8" viewBox="0 0 6 8" aria-hidden="true"><path d="M0 0v8l6-4z" fill="#fff" /></svg></div>
      </div>
      <div className="mb-[5px] mt-[4px] w-[297px] shrink-0 overflow-hidden border border-t-0 border-[#dddcda]">
        <div className="flex h-[27px] items-center justify-between pl-[11px] pr-[6px] text-[14px] font-bold text-[#3c3c3c]">
          <h2>Properties</h2>
          <button aria-label="Close"><svg width="7" height="8" viewBox="0 0 7 8" aria-hidden="true"><path d="M0 1l7 6M7 1L0 7" stroke="#444" strokeWidth="1.300" /></svg></button>
        </div>
        <Head t="Styles" menu={false} />
        <div className="flex h-[35px] items-center justify-between px-[7px] pb-[4px]">
          <Combo value="Default" label="Style" className="w-[225px]" />
          <span className="flex"><Mini n="refresh" /><Mini n="plus" /></span>
        </div>
        <Head t="Character" dim />
        <div className="h-[113px] px-[7px]">
          <div className="flex justify-between pt-[3px]">
            <Combo value="Calibri" label="Font" italic className="w-[207px]" />
            <Combo value="9" label="Size" className="w-[66px]" />
          </div>
          <div className="mt-[14px] flex justify-between">
            <span className="flex items-center"><Mini n="bold" /><Mini n="italic" /><Mini n="under" /><MiniDrop /><Mini n="strike" /><Mini n="shadow" /></span>
            <span className="flex"><Mini n="aup" /><Mini n="adn" /></span>
          </div>
          <div className="mt-[15px] flex justify-between">
            <span className="flex items-center"><Mini n="fcolor" /><MiniDrop /></span>
            <span className="flex items-center"><Mini n="spacing" /><MiniDrop /><span className="w-[13px]" /><Mini n="sup" /><Mini n="sub" /></span>
          </div>
        </div>
        <Head t="Number Format" />
        <div className="h-[149px] px-[7px]">
          <div className="flex items-center justify-between pt-[3px]">
            <div className="flex h-[25px] w-[200px] items-center overflow-hidden rounded-[4px] border border-[#a8a5a1] bg-gradient-to-b from-white to-[#eceae8]">
              <select aria-label="Category" className="flex-1 appearance-none bg-transparent pl-[2px] text-[14px] leading-none text-[#3c3c3c] outline-none"><option>Number</option></select>
              <span className="flex h-[17px] w-[18px] flex-col items-center justify-between border-l border-[#c6c3bf] py-[3px]">
                <svg width="6" height="4" viewBox="0 0 6 4" aria-hidden="true"><path d="M0 4h6L3 0z" fill="#666" /></svg>
                <svg width="6" height="4" viewBox="0 0 6 4" aria-hidden="true"><path d="M0 0h6L3 4z" fill="#666" /></svg>
              </span>
            </div>
            <span className="flex"><Mini n="dollar" /><Mini n="pct" /><Mini n="n00" /></span>
          </div>
          <div className="mt-[6px] flex justify-between text-[14px] leading-[20px] text-[#3c3c3c]">
            <div><div>Decimal places:</div><div className="mt-[4px]"><Spin value="" label="Decimal places" /></div></div>
            <div className="w-[104px] whitespace-nowrap"><div>Leading zeroes:</div><div className="mt-[4px]"><Spin value="1" label="Leading zeroes" /></div></div>
          </div>
          <div className="mt-[9px] flex flex-col gap-[9px] pl-[4px] leading-[20px]"><Check t="Negative numbers in red" /><Check t="Thousands separator" /></div>
        </div>
        <Head t="Alignment" />
        <div className="h-[180px] px-[7px] text-[14px] text-[#3c3c3c]">
          <div className="flex justify-between pt-[3px]">
            <span className="flex"><Mini n="al" /><Mini n="ac" on /><Mini n="ar" /><Mini n="aj" /></span>
            <span className="flex"><Mini n="vt" /><Mini n="vm" on /><Mini n="vb" /></span>
          </div>
          <div className="mt-[13px] flex justify-between">
            <div>
              <div className="flex h-[24px] items-center text-[#8a8886]"><span className="w-[56px]">Indent:</span><Mini n="ind" /><Mini n="outd" /></div>
              <div className="mt-[8px]"><Spin value="0 pt" label="Indent" disabled /></div>
            </div>
            <div className="flex w-[102px] flex-col gap-[10px] leading-[20px]"><Check t="Merge cells" disabled /><Check t="Wrap text" /></div>
          </div>
          <div className="mt-[12px] flex items-center justify-between">
            <span>Text orientation:</span>
            <Combo value="0°" label="Text orientation" className="w-[62px]" />
            <span className="flex items-center gap-[3px]">
              <button aria-label="Lower edge" className="flex h-[31px] w-[23px] items-center justify-center bg-white"><svg width="14" height="12" viewBox="0 0 14 12" aria-hidden="true"><path d="M4 1h9L10 11H1z" fill="none" stroke="#444" /><path d="M1.500 9h9l-.5 2H1z" fill="#5b52e0" /></svg></button>
              <button aria-label="Upper edge" className="flex h-[31px] w-[23px] items-center justify-center bg-white"><svg width="14" height="12" viewBox="0 0 14 12" aria-hidden="true"><path d="M4 1h9L10 11H1z" fill="none" stroke="#444" /><path d="M4 1h9l-1 3H3z" fill="#5b52e0" /></svg></button>
              <button aria-label="Inside" className="flex h-[30px] w-[22px] items-center justify-center border-2 border-[#ee7543] bg-white"><span className="h-[12px] w-[10px] border border-[#444]" /></button>
            </span>
          </div>
          <div className="mt-[13px] pl-[4px] leading-[20px]"><Check t="Vertically stacked" /></div>
        </div>
        <Head t="Cell Appearance" />
        <div className="flex justify-between px-[7px] pt-[4px] text-[14px] text-[#3c3c3c]">
          <div>
            <div className="leading-[24px]">Background:</div>
            <div className="mt-[16px] flex items-center gap-[10px] pl-[4px]">
              <svg width="41" height="41" viewBox="0 0 41 41" aria-label="Borders"><path d="M20.500 1v39M1 20.500h39" stroke="#b5b5b5" /><path d="M.5.5h40v40H.5z" fill="none" stroke="#333" /></svg>
              <Down />
            </div>
          </div>
          <div className="flex flex-col gap-[9px] pr-[6px]">
            <div className="flex h-[24px] items-center gap-[5px]"><Icon n="fill" s={12} /><span className="mr-[6px] h-[12px] w-[59px] border border-black bg-white" /><Down /></div>
            <div className="flex h-[24px] items-center justify-between"><span className="h-px w-[74px] bg-black" /><Down /></div>
            <div className="flex h-[24px] items-center gap-[5px]"><Icon n="frame" s={12} /><span className="mr-[6px] h-[12px] w-[59px] border border-black bg-white" /><Down /></div>
          </div>
        </div>
      </div>
      <nav aria-label="Decks" className="flex flex-1 flex-col items-center pt-[9px]">
        <button aria-label="Settings" className="flex h-[20px] items-center"><Icon n="settings" /></button>
        <span className="my-[7px] h-px w-[22px] bg-[#ccc]" />
        <button aria-label="Properties" className="mb-[4px] flex h-[32px] w-[32px] items-center justify-center rounded border border-[#b5b3af] bg-[#f7f6f5]"><Icon n="props" s={18} /></button>
        {['styles', 'gallery', 'nav', 'fx'].map((n) => <button key={n} aria-label={n} className="flex h-[35px] items-center"><Icon n={n} s={18} /></button>)}
      </nav>
    </aside>
  );
}

function CalcWindow() {
  return (
    <div className="flex min-h-0 flex-1 flex-col bg-[#f2f1ef]">
      <div className="flex h-[41px] shrink-0 items-center border-b border-[#d6d4d1]">
        <Grip />
        <Tools list="calc v open v save v | pdf print preview | cut copy paste v brush | undo v redo v | find spell | insRow insCol delRow delCol | sort az za filter | image chart pivot | omega link comment header | freeze !rowcol split | draw" />
      </div>
      <div className="flex h-[41px] shrink-0 items-center border-b border-[#d6d4d1]">
        <Grip />
        <Combo value="Calibri" label="Font name" italic className="w-[156px]" />
        <Combo value="9" label="Font size" className="ml-[10px] mr-px w-[67px]" />
        <Tools list="| bold italic under | fcolor v hcolor v | al !ac ar | wrap merge | vt !vm vb | dollar pct n00 date | dadd ddel | ind outd | border v lstyle v bcolor v | c1 c2 c3 c4" />
      </div>
      <div className="flex min-h-0 flex-1">
        <div className="flex min-w-0 flex-1 flex-col">
          <div className="flex h-[36px] shrink-0 items-center">
            <Combo value="R22" label="Name box" className="ml-px w-[154px]" />
            <span className="w-px" />
            <Sep /><Tools list="fx sum eq |" />
            <input aria-label="Formula" defaultValue="100" className="h-[25px] min-w-0 flex-1 rounded-[4px] border border-[#a8a5a1] bg-white px-[4px] text-[14px] text-[#3c3c3c] outline-none" />
            <button aria-label="Expand" className="ml-[5px] mr-[6px] flex h-[23px] w-[11px] items-center justify-center rounded-[5px] border border-[#b5b3af] bg-white"><Down /></button>
          </div>
          <div className="flex min-h-0 flex-1">
            <div className="min-w-0 flex-1 overflow-hidden"><Sheet /></div>
            <div className="flex w-[14px] shrink-0 flex-col items-center border border-[#b5b3af] bg-[#d8d6d3]">
              <span className="flex h-[13px] w-full items-center justify-center rounded-t-full bg-[#f2f1ef]"><svg width="6" height="4" viewBox="0 0 6 4" aria-hidden="true"><path d="M0 4h6L3 0z" fill="#aaa" /></svg></span>
              <span className="flex h-[138px] w-full flex-col items-center justify-center gap-[2px] rounded-full border border-[#9c9a96] bg-gradient-to-r from-white to-[#e3e1de]">{[0, 1, 2].map((i) => <span key={i} className="h-px w-[4px] bg-[#999]" />)}</span>
              <span className="flex-1" />
              <span className="flex h-[13px] w-full items-center justify-center rounded-b-full bg-[#f2f1ef]"><svg width="8" height="5" viewBox="0 0 6 4" aria-hidden="true"><path d="M0 0h6L3 4z" fill="#666" /></svg></span>
            </div>
          </div>
          <div className="mr-[14px] flex h-[13px] shrink-0 items-center border-y border-[#a8a5a1] bg-[#d8d6d3]">
            <span className="flex h-full w-[12px] items-center justify-center rounded-l-full bg-[#f2f1ef]"><svg width="4" height="6" viewBox="0 0 4 6" aria-hidden="true"><path d="M4 0v6L0 3z" fill="#aaa" /></svg></span>
            <span className="flex h-full w-[596px] items-center justify-center gap-[2px] rounded-full border-x border-[#8e8c89] bg-gradient-to-b from-white to-[#e3e1de]">{[0, 1, 2].map((i) => <span key={i} className="h-[4px] w-px bg-[#999]" />)}</span>
            <span className="flex-1" />
            <span className="flex h-full w-[14px] items-center justify-center rounded-r-full border border-[#b5b3af] bg-[#f2f1ef]"><svg width="5" height="6" viewBox="0 0 4 6" aria-hidden="true"><path d="M0 0v6l4-3z" fill="#555" /></svg></span>
            <span className="h-full w-[4px] border-l-2 border-[#333] bg-[#aaa]" />
          </div>
          <div className="flex h-[20px] shrink-0 items-stretch text-[13px] leading-[18px] text-[#3c3c3c]">
            <div className="flex w-[118px] items-center gap-[11px] pl-[13px]">
              {['M7 0v10L1 5zM0 0h1v10H0z', 'M8 0v10L2 5z', 'M1 0v10l6-5z', 'M0 0v10l6-5zM7 0h1v10H7z'].map((d) => <svg key={d} width="8" height="10" viewBox="0 0 8 10" aria-hidden="true"><path d={d} fill="#9b9997" /></svg>)}
              <svg width="12" height="12" viewBox="0 0 12 12" className="ml-[6px]" aria-label="Add sheet"><path d="M4 0h4v4h4v4H8v4H4V8H0V4h4z" fill="#444" /></svg>
            </div>
            <button className="w-[84px] border-x border-b-[4px] border-x-[#8e8c89] border-b-[#3d3089] bg-white text-center text-[12px] font-bold leading-[14px]">шахматка</button>
            <button className="w-[67px] border border-l-0 border-[#8e8c89] bg-[#ffc800] text-center text-black">график</button>
            <button className="w-[39px] border border-l-0 border-[#8e8c89] bg-[#dcd9d6] text-center">ид</button>
            <button className="w-[65px] border border-l-0 border-[#8e8c89] bg-[#dcd9d6] text-center">% СМР</button>
          </div>
        </div>
        <Sidebar />
      </div>
      <footer className="flex h-[21px] shrink-0 items-center border-t border-[#b5b3af] text-[12px] text-[#3c3c3c] [&>span]:h-[16px] [&>span]:border-r [&>span]:border-[#c6c3bf] [&>span]:leading-[16px]">
        <span className="w-[355px] pl-[10px]">Sheet 1 of 5</span>
        <span className="w-[445px]" />
        <span className="w-[409px] pl-[8px]">PageStyle_шахматка</span>
        <span className="w-[68px]" />
        <span className="flex w-[29px] items-center justify-center"><svg width="14" height="12" viewBox="0 0 14 12" aria-hidden="true"><path d="M1 1h6M4 1v10M1 11h6M9 8v3h4V9" fill="none" stroke="#444" strokeWidth="1.300" /></svg></span>
        <span className="flex w-[29px] items-center justify-center"><svg width="11" height="11" viewBox="0 0 11 11" aria-hidden="true"><path d="M1 1h7l2 2v7H1zM3 1v3h5V1M3 10V7h5v3" fill="none" stroke="#d94452" strokeWidth="1.400" /></svg></span>
        <span className="w-[29px]" />
        <span className="flex-1 text-center">Sum=100</span>
        <span className="flex w-[143px] items-center justify-center gap-[3px]">
          <button aria-label="Zoom out" className="text-[14px] leading-none">−</button>
          <input type="range" aria-label="Zoom" min={0} max={100} defaultValue={43} className="h-px w-[98px] appearance-none bg-[#9c9a96] [&::-webkit-slider-thumb]:h-[9px] [&::-webkit-slider-thumb]:w-[9px] [&::-webkit-slider-thumb]:appearance-none [&::-webkit-slider-thumb]:rounded-full [&::-webkit-slider-thumb]:border-2 [&::-webkit-slider-thumb]:border-[#666] [&::-webkit-slider-thumb]:bg-white" />
          <button aria-label="Zoom in" className="text-[14px] leading-none">+</button>
        </span>
        <output className="w-[49px] pl-[12px]">90%</output>
      </footer>
    </div>
  );
}

/* ---------- launcher ---------- */
const Doc = ({ c, children }: { c: string; children: ReactNode }) => (
  <><path d="M9 7h22l12 12v28H9z" fill="#fff" stroke={c} strokeWidth="3" />{<path d="M31 7l12 12V7z" fill={c} />}{children}</>
);
const Disk = () => (
  <><path d="M12 12h28l9 22H3z" fill="#e3e3e3" stroke="#bbb" /><path d="M3 34h46l-2 8H6z" fill="#9b9b9b" /><path d="M18 37h26v4H18z" fill="#333" /><ellipse cx="26" cy="24" rx="15" ry="9" fill="#d4d4d4" stroke="#aaa" /><ellipse cx="26" cy="24" rx="5" ry="3" fill="#eee" stroke="#aaa" /></>
);
const APPS: { n: string; bg: string; run?: boolean; art: ReactNode }[] = [
  { n: 'Dash', bg: 'from-[#b5587c] to-[#8a1d48]', art: <><circle cx="26" cy="26" r="20" fill="none" stroke="#d08aa5" strokeWidth="2" strokeDasharray="20 12" /><circle cx="26" cy="26" r="14" fill="#fff" /><circle cx="26" cy="26" r="7" fill="none" stroke="#8a1d48" strokeWidth="3" strokeDasharray="11 3.600" /><circle cx="16.500" cy="26" r="2.200" fill="#8a1d48" /><circle cx="31" cy="18" r="2.200" fill="#8a1d48" /><circle cx="31" cy="34" r="2.200" fill="#8a1d48" /></> },
  { n: 'Files', bg: 'from-[#b07070] to-[#8d3d43]', run: true, art: <><path d="M8 5h36l4 8v34H4V13z" fill="#c9c7c3" /><path d="M8 12h36v12H8z" fill="#6b3a1b" /><path d="M10 14h32v10H10z" fill="#e8843c" /><path d="M5 22h42v25H5z" fill="#b5b3af" /><path d="M5 22h42v4H5z" fill="#dddbd8" /><rect x="20" y="31" width="12" height="9" rx="1.500" fill="#eee" stroke="#777" strokeWidth="2" /></> },
  { n: 'Writer', bg: 'from-[#4c98cf] to-[#2a6ca3]', run: true, art: <Doc c="#15507f"><path d="M14 20h8M14 25h8M14 30h24M14 35h24M14 40h18" stroke="#15507f" strokeWidth="2" /><path d="M25 19h13v9H25z" fill="#2a6ca3" /></Doc> },
  { n: 'Calc', bg: 'from-[#6cc45c] to-[#3c9c30]', run: true, art: <Doc c="#2d7d1f"><path d="M14 19h22v21H14zM14 24h22M14 29h22M14 34h22M20 19v21M26 19v21M31 19v21" fill="none" stroke="#3c9c30" strokeWidth="1.500" /><path d="M28 31h9v10h-9z" fill="#fff" stroke="#888" /><path d="M30 36h2v4h-2zM33 33h2v7h-2z" fill="#e8672c" /></Doc> },
  { n: 'Settings', bg: 'from-[#9a5a78] to-[#6e2e4c]', art: <><circle cx="26" cy="26" r="14" fill="none" stroke="#dcdcdc" strokeWidth="9" /><circle cx="26" cy="26" r="20" fill="none" stroke="#dcdcdc" strokeWidth="5" strokeDasharray="8 7.700" /><path d="M8 42l20-20" stroke="#c22a1e" strokeWidth="8" strokeLinecap="round" /><path d="M28 22l8-8" stroke="#e8e8e8" strokeWidth="5" /><path d="M36 6a8 8 0 1 0 10 10" fill="none" stroke="#e8e8e8" strokeWidth="5" /></> },
  { n: 'Chrome', bg: 'from-[#c9ad62] to-[#a5863a]', run: true, art: <><path d="M26 26L7 15a22 22 0 0 1 38 0z" fill="#df4a3c" /><path d="M26 26L45 15a22 22 0 0 1-19 33z" fill="#fcc934" /><path d="M26 26v22A22 22 0 0 1 7 15z" fill="#23a455" /><circle cx="26" cy="26" r="10" fill="#fff" /><circle cx="26" cy="26" r="8" fill="#4a86ee" /></> },
  { n: 'Remote terminal', bg: 'from-[#5d90cc] to-[#2f63a5]', run: true, art: <><rect x="3" y="5" width="46" height="33" rx="3" fill="#ece9e0" stroke="#999" /><rect x="7" y="9" width="38" height="25" fill="#1d1f24" /><path d="M20 38h12l2 6H18zM14 44h24v3H14z" fill="#d8d5cc" /><text x="10" y="26" fontFamily="Liberation Mono" fontWeight="700" fontSize="16" fill="#4aa3ff">$_</text></> },
  { n: 'Code', bg: 'from-[#5f9acb] to-[#3a74ac]', run: true, art: <><path d="M7 8l30-4 6 36-30 8z" fill="#2f3136" /><path d="M36 4l10 8-2 26-27 4 22-6z" fill="#2a8cd8" /><path d="M14 18l4-1 14 14-1 4zM14 30l18-15-1 20" fill="none" stroke="#2a9ae8" strokeWidth="2.500" /></> },
  { n: 'FileZilla', bg: 'from-[#d04848] to-[#a50e0e]', run: true, art: <><rect x="3" y="3" width="46" height="46" fill="#a90a0a" stroke="#d04848" strokeWidth="2" strokeDasharray="4 3" /><path d="M12 41L18 10h18l-2 6H22l-2 7h11l-1 5H19l-3 13zM28 22h14l-1 4-9 10h8l-1 6H22l1-5 9-10h-5z" fill="#fff" /></> },
  { n: 'Skype', bg: 'from-[#7cb6cf] to-[#4487a5]', run: true, art: <><circle cx="26" cy="26" r="18" fill="#0baef0" /><circle cx="16" cy="16" r="11" fill="#0baef0" /><circle cx="37" cy="37" r="11" fill="#0baef0" /><text x="26" y="38" textAnchor="middle" fontFamily="Roboto" fontWeight="700" fontSize="34" fill="#fff">S</text></> },
  { n: 'Postman', bg: 'from-[#c87a5a] to-[#a04a2c]', run: true, art: <><circle cx="27" cy="26" r="20" fill="#f26024" /><path d="M32 18L18 32l4 3 14-13z" fill="#f59a3c" stroke="#fff" /><circle cx="37" cy="16" r="5" fill="#999" stroke="#fff" /><path d="M20 32L8 46l10-4 8-8z" fill="#888" stroke="#fff" /></> },
  { n: 'nqq', bg: 'from-[#6cb865] to-[#3b9434]', run: true, art: <><rect x="9" y="5" width="34" height="42" rx="3" fill="#777" /><path d="M9 18h34v17H9z" fill="#47a33f" /><path d="M36 5h2v42h-2z" fill="#444" /><text x="24" y="30" textAnchor="middle" fontFamily="Noto Sans" fontSize="12" fill="#eee">nqq</text></> },
  { n: 'TeamViewer', bg: 'from-[#3c93e2] to-[#0a62bf]', run: true, art: <><circle cx="26" cy="26" r="20" fill="#fff" /><path d="M7 26l11-8v5h16v-5l11 8-11 8v-5H18v5z" fill="#0d6cc9" /></> },
  { n: 'Slack', bg: 'from-[#c08055] to-[#9c5626]', run: true, art: <><path d="M7 9h18l-10 37H7z" fill="#3eb991" /><path d="M25 7h20v15L22 14z" fill="#e9a820" /><path d="M45 22v23H28z" fill="#e01765" /><path d="M7 44h25l4-9z" fill="#441a49" /><path d="M13 13l24-4 8 29-24 6z" fill="#fff" /><text x="26" y="35" textAnchor="middle" fontFamily="Roboto" fontWeight="700" fontSize="22" fill="#222">S</text></> },
  { n: 'Postgres', bg: 'from-[#5d90c0] to-[#30659c]', run: true, art: <><path d="M4 12C8 2 20 4 26 6c8-4 20-2 22 8 2 8-4 16-8 20 4 0 6 0 8-1-2 4-8 5-12 4v8c-2 6-10 5-11 0l-1-10c-4 1-8 3-10 0C8 30 2 22 4 12z" fill="#336791" stroke="#fff" strokeWidth="2.500" /><path d="M20 14c-4 2-5 12-2 18M32 14c6 2 6 12 2 20" fill="none" stroke="#fff" strokeWidth="2" /></> },
  { n: 'Robomongo', bg: 'from-[#5cb65c] to-[#2f962f]', run: true, art: <><path d="M14 26C16 8 36 8 38 26c0 14-24 14-24 0z" fill="#33903a" /><circle cx="26" cy="22" r="5" fill="#7fe0b5" stroke="#226b2b" strokeWidth="2" /><path d="M11 26c-2 8 2 14 6 12M41 26c2 8-2 14-6 12" fill="none" stroke="#b09070" strokeWidth="3" /><path d="M18 48h18" stroke="#2a7d2a" strokeWidth="2" /></> },
  { n: 'Disk', bg: 'from-[#8a5270] to-[#6a1f44]', art: <Disk /> },
];

function Launcher() {
  return (
    <nav aria-label="Launcher" className="flex w-[65px] shrink-0 flex-col gap-[7px] overflow-hidden border-r-2 border-[#7d3a5e] bg-[#5e1035] pt-[6px]">
      {APPS.map((a) => (
        <div key={a.n} className="flex shrink-0 items-center">
          <span className="flex w-[6px] shrink-0">{a.run && <svg width="5" height="8" viewBox="0 0 5 8" aria-hidden="true"><path d="M0 0v8l5-4z" fill="#e3dfe1" /></svg>}</span>
          <button aria-label={a.n} className={'flex h-[52px] w-[52px] items-center justify-center rounded-[4px] border border-white/25 bg-gradient-to-b ' + a.bg}>
            <svg width="50" height="50" viewBox="0 0 52 52" aria-hidden="true">{a.art}</svg>
          </button>
        </div>
      ))}
      <button aria-label="Volume" className="ml-[6px] h-[49px] w-[52px] shrink-0 rounded-[4px] bg-gradient-to-b from-[#7d4563] to-[#6a1f44]">
        <svg width="52" height="49" viewBox="0 0 52 49" aria-hidden="true"><path d="M12 4h28l8 14H4z" fill="#e3e3e3" /><path d="M4 18h44l-2 6H6z" fill="#999" /><ellipse cx="26" cy="11" rx="14" ry="5" fill="#d0d0d0" stroke="#aaa" /><path d="M12 27h28v18H12z" fill="#cbb6c0" opacity=".5" /></svg>
      </button>
    </nav>
  );
}

/* ---------- browser ---------- */
const GLogo = () => (
  <svg width="16" height="16" viewBox="0 0 16 16" className="shrink-0" aria-hidden="true"><circle cx="8" cy="8" r="8" fill="#fff" />
    <g fill="none" strokeWidth="2.300"><path d="M12 4.500A5.300 5.300 0 0 0 3.400 5.500" stroke="#ea4335" /><path d="M3.400 5.500a5.300 5.300 0 0 0 0 5" stroke="#fbbc05" /><path d="M3.400 10.500a5.300 5.300 0 0 0 8.200 1.300" stroke="#34a853" /><path d="M11.600 11.800A5.300 5.300 0 0 0 13.300 8H8" stroke="#4285f4" /></g></svg>
);
const Fav = ({ children }: { children: ReactNode }) => <svg width="16" height="16" viewBox="0 0 16 16" className="shrink-0 overflow-visible" aria-hidden="true">{children}</svg>;
const T = (t: string, c = '#fff', s = 11, x = 8, y = 12) => <text x={x} y={y} textAnchor="middle" fontFamily="Roboto" fontWeight="700" fontSize={s} fill={c}>{t}</text>;
const fav: Record<string, ReactNode> = {
  page: <Fav><path d="M3 1h7l3 3v11H3zM10 1v3h3" fill="none" stroke="#444" strokeWidth="1.200" /></Fav>,
  g: <GLogo />,
  in: <Fav><path d="M0 0h16v16H0z" fill="#fff" /><path d="M1 3h7v5H1z" fill="#f5b120" /><path d="M1 11h14" stroke="#333" strokeWidth="3" strokeDasharray="2 .6" /></Fav>,
  arc: <Fav><path d="M2 14C2 0 14 0 14 14" fill="none" stroke="#d43030" strokeWidth="3" strokeDasharray="3.500 1" /></Fav>,
  ba: <Fav><path d="M8 0l3 2 4 1-1 5 1 5-4 1-3 2-3-2-4-1 1-5-1-5 4-1z" fill="#e2544c" />{T('G')}</Fav>,
  tr: <Fav><path d="M0 0h11v14H0z" fill="#4a86e8" /><path d="M8 5h8v11H9z" fill="#ddd" />{T('G', '#fff', 9, 5, 10)}<path d="M10 9h5M12 8c0 3 2 4 3 5M14 9c-1 3-2 4-4 5" stroke="#4a86e8" fill="none" /></Fav>,
  gh: <Fav><circle cx="8" cy="8" r="8" fill="#222" /><path d="M4 3l2 1h4l2-1v3c1 4-1 5-3 5l1 5H6l1-5C4 11 3 9 4 6z" fill="#d9d4c2" /></Fav>,
  jf: <Fav>{T('JF', '#222', 13, 8, 13)}</Fav>,
  sl: <Fav><path d="M0 0h16v16H0z" fill="#f4f2ea" /><path d="M1 2l3 2M2 7h2v6M8 3v3M11 6l3 4M6 10l3 2M12 1l2 3" stroke="#e0457b" strokeWidth="1.500" strokeDasharray="1.500 1" /><path d="M5 8l3 1M1 14h14M7 13l5-4" stroke="#2a9ad0" strokeWidth="1.500" strokeDasharray="2 1" /></Fav>,
  vx: <Fav><path d="M0 0h16v16H0z" fill="#ffcc33" /><path d="M0 0h16L8 11z" fill="#e8392c" /></Fav>,
  book: <Fav><path d="M4 1h10l-2 13H2z" fill="#111" /><path d="M6 4h6M6 7h5M3 13h9" stroke="#fff" /></Fav>,
  vase: <Fav><path d="M3 1h10v2l-3 4 2 3v5H5v-5l1-3-3-4z" fill="#8aa5b5" stroke="#554" /><path d="M5 10h6v4H5z" fill="#d99a2b" /></Fav>,
  hd: <Fav>{T('HD', '#222', 10, 8, 12)}</Fav>,
  win: <Fav><path d="M0 2l7-1v6H0zM8 1l8-1v7H8zM0 8h7v6l-7-1zM8 8h8v8l-8-1z" fill="#111" /></Fav>,
  mongo: <Fav><path d="M0 0h16v16H0z" fill="#3b2a1e" /><path d="M8 1c5 5 3 10 0 12-3-2-5-7 0-12z" fill="#3fa14a" /></Fav>,
  folder: <Fav><path d="M1 2h6l1 2h7v10H1z" fill="#6b6b6b" /></Fav>,
  sb: <Fav><path d="M0 0h16v16H0z" fill="#2f88c9" />{T('SB', '#fff', 9, 8, 11)}</Fav>,
  drop: <Fav><path d="M8 0c8 9 5 16 0 16S0 9 8 0z" fill="#2f8de0" />{T('G', '#fff', 8, 8, 13)}</Fav>,
  rec: <Fav><path d="M0 0h16v16H0z" fill="#000" /><path d="M1 5l4 1 3 4 3-4 4-1-4 7H5z" fill="#fff" /></Fav>,
  sup: <Fav><path d="M2 2h12l2 4-8 9-8-9z" fill="#12496b" />{T('S', '#3cd0d8', 10, 8, 11)}</Fav>,
  onl: <Fav><circle cx="8" cy="8" r="8" fill="#2a9a47" /><path d="M3 5l3 4 6-7M3 8l3 4 7-8" stroke="#fff" strokeWidth="1" fill="none" /></Fav>,
  tw: <Fav><rect width="15" height="16" rx="2" fill="#f06a1a" />{T('T', '#fff', 12, 7, 12)}</Fav>,
  leo: <Fav><circle cx="8" cy="8" r="8" fill="#25b06c" /><circle cx="8" cy="10" r="3" fill="#fff" /><circle cx="4" cy="7" r="1.500" fill="#fff" /><circle cx="7" cy="4" r="1.500" fill="#fff" /><circle cx="11" cy="5" r="1.500" fill="#fff" /></Fav>,
  idi: <Fav><path d="M1 1l7 3 6 2-3 4 4 5-6-2-5-4z" fill="#f5a818" /><path d="M1 1v14M5 12l3 3" stroke="#444" strokeWidth="2" /></Fav>,
  mail: <Fav><rect width="16" height="16" rx="2" fill="#1476d2" /><circle cx="8" cy="8" r="5" fill="none" stroke="#f9a31a" strokeWidth="1.500" /><circle cx="8" cy="8" r="2" fill="none" stroke="#f9a31a" strokeWidth="1.500" /></Fav>,
  kon: <Fav><rect width="16" height="16" rx="2" fill="#1b6fc9" /><circle cx="8" cy="8.500" r="4" fill="none" stroke="#fff" strokeWidth="2" /></Fav>,
  tin: <Fav><path d="M1 0h14v9c0 4-4 5-7 7-3-2-7-3-7-7z" fill="#333" /><path d="M2.500 1.500h11V9c0 3-3 4-5.500 5.500C5.500 13 2.500 12 2.500 9z" fill="#ffdd2d" />{T('T', '#333', 9, 8, 11)}</Fav>,
  tinb: <Fav><circle cx="8" cy="8" r="7" fill="#fff" stroke="#333" strokeWidth="2" strokeDasharray="1.500 1" /><path d="M5 4h6v5c0 2-2 3-3 3s-3-1-3-3z" fill="#ffdd2d" stroke="#333" /></Fav>,
};

const TABS: [string, string][] = [
  ['page', 'Ad'], ['page', 'Ad'], ['in', 'Pa'], ['arc', 'Fe'], ['ba', 'ba'], ['tr', 'Go'], ['g', 'no'], ['gh', 'Ur'], ['g', 'js'], ['jf', 'Be'], ['sl', 'AF'],
  ['vx', 'Вх'], ['g', 'do'], ['book', 'SS'], ['vase', 'Ho'], ['sl', 'AF'], ['g', 'ул'], ['hd', 'См'], ['', 'New'], ['win', 'ST'], ['g', 'm'], ['mongo', 'm'],
];
function TabEdge() {
  return (
    <svg width="16" height="28" viewBox="0 0 16 28" className="-ml-[8px] block shrink-0" aria-hidden="true">
      <path d="M3 0h12L9 15z" fill="#dcc5a6" /><path d="M2 0l11 28M15 0L9 15" fill="none" stroke="#a39d8b" />
    </svg>
  );
}
function TabStrip() {
  return (
    <div className="flex h-[28px] shrink-0 border-b border-[#a8a493] bg-[#dcc5a6] pl-[6px] pr-[6px]">
      <div role="tablist" aria-label="Tabs" className="flex min-w-0 flex-1 bg-[#d9d4c2]">
        <button role="tab" aria-label="Gmail" className="flex w-[48px] shrink-0 items-center pl-[5px]">
          <svg width="8" height="28" viewBox="0 0 8 28" className="-ml-[5px] mr-[9px]" aria-hidden="true"><path d="M0 0h8L0 28z" fill="#dcc5a6" /><path d="M8 0L0 28" stroke="#a39d8b" /></svg>
          <Fav><path d="M0 0h16v9H0z" fill="#fff" /><path d="M1 9V1l7 6 7-6v8" fill="none" stroke="#d93a2f" strokeWidth="2.200" />{T('100+', '#222', 7.5, 8, 16)}</Fav>
        </button>
        <button role="tab" aria-label="WhatsApp" className="flex w-[40px] shrink-0 items-center"><TabEdge /><span className="w-[3px]" /><Fav><circle cx="8" cy="8" r="8" fill="#25b843" /><path d="M5 4c-2 3 3 9 7 7l-1-2-2 .5L6.500 7 7 5.500z" fill="#fff" /></Fav></button>
        {TABS.map(([ic, t], i) => {
          const active = i === 19;
          return (
            <button key={i} role="tab" aria-selected={active} className={'flex min-w-0 flex-1 items-center text-[14px] text-[#333] ' + (active ? 'bg-[#f6f6e8]' : '')}>
              <TabEdge />
              {ic ? fav[ic] : null}
              <span className={'min-w-0 flex-1 whitespace-nowrap text-left ' + (ic ? 'ml-[7px]' : '')}>{t}</span>
              <svg width="8" height="8" viewBox="0 0 8 8" className="mx-[8px] shrink-0" aria-hidden="true"><path d="M0 0l8 8M8 0L0 8" stroke="#666" strokeWidth="1.500" /></svg>
            </button>
          );
        })}
      </div>
      <svg width="36" height="28" viewBox="0 0 36 28" className="shrink-0" aria-label="New tab"><path d="M3 7h24l6 16H9z" fill="#dcd7c6" stroke="#a39d8b" /></svg>
      <button className="ml-[6px] mt-[3px] h-[17px] w-[52px] shrink-0 border border-[#a98f69] bg-[#b79a71] text-center text-[13px] leading-[15px] text-white">Anton</button>
    </div>
  );
}

const BOOKMARKS: [string, string][] = [
  ['folder', 'EASY'], ['g', 'Google'], ['sb', 'Спорт'], ['drop', 'GISMETEO.RU'], ['rec', 'Радио Рекорд'], ['folder', 'IT'], ['sup', 'AnySiteForYou'], ['onl', 'ОнЛ@йн'],
  ['tw', 'M1 TWiki'], ['leo', 'LEO'], ['idi', 'Иди и смотри'], ['mail', 'MAIL.RU'], ['kon', 'Контур'], ['tin', 'Тинькофф'], ['tinb', 'Тинькофф Бизн'], ['page', 'GPB'],
];

function Extensions() {
  const x = <path d="M12 -1l7 7M19 -1l-7 7" stroke="#d02020" strokeWidth="1.500" />;
  const arts = [
    <><path d="M1 11h3v5H1zM6 7h3v9H6z" fill="#555" /><path d="M11 2h4v14h-4z" fill="#bbb" />{x}</>,
    <path d="M8 0l7 4v8l-7 4-7-4V4z" fill="#c9c9c9" stroke="#999" />,
    <><path d="M0 0h16v16H0z" fill="#d9509f" /><path d="M8 0h8v8H8z" fill="#f3a0b8" /><path d="M0 10h8v6H0z" fill="#a8268c" /></>,
    <><path d="M0 0h16v16H0z" fill="#eef3f6" stroke="#888" /><path d="M4 14C3 5 8 2 13 3c-2 6-5 6-7 11z" fill="#2a90d8" /></>,
    <><circle cx="8" cy="8" r="6.500" fill="none" stroke="#52d18c" strokeWidth="2" /><circle cx="8" cy="8" r="3" fill="#52d18c" />{x}</>,
    <><path d="M0 0h16v16H0z" fill="#cfcfc4" /><g fill="none" stroke="#fff"><ellipse cx="8" cy="8" rx="6" ry="2.500" /><ellipse cx="8" cy="8" rx="2.500" ry="6" /></g>{x}</>,
    <><circle cx="7" cy="7" r="7" fill="#2374b8" /><path d="M3 3l5 1-2 5zM9 9l5-1-1 6-4 1z" fill="#5fb848" /></>,
  ];
  return (
    <div className="flex items-center gap-[16px] pl-[12px] pr-[16px]">
      {arts.map((a, i) => <svg key={i} width="16" height="16" viewBox="0 0 16 16" className="overflow-visible" aria-hidden="true">{a}</svg>)}
      <svg width="4" height="14" viewBox="0 0 4 14" className="ml-[6px]" aria-label="Menu"><circle cx="2" cy="2" r="1.500" fill="#444" /><circle cx="2" cy="7" r="1.500" fill="#444" /><circle cx="2" cy="12" r="1.500" fill="#444" /></svg>
    </div>
  );
}

function BrowserChrome() {
  return (
    <>
      <TabStrip />
      <div className="flex h-[33px] shrink-0 items-center bg-[#f6f6e8] pt-px">
        <div className="flex items-center gap-[12px] pl-[10px] pr-[9px]">
          <svg width="16" height="16" viewBox="0 0 16 16" aria-label="Back"><path d="M15 8H2M8 2L2 8l6 6" fill="none" stroke="#333" strokeWidth="2" /></svg>
          <svg width="16" height="16" viewBox="0 0 16 16" aria-label="Forward"><path d="M1 8h13M8 2l6 6-6 6" fill="none" stroke="#cfcfc0" strokeWidth="2" /></svg>
          <svg width="16" height="16" viewBox="0 0 16 16" aria-label="Reload"><path d="M13 11.500A6 6 0 1 1 13 4.500" fill="none" stroke="#333" strokeWidth="2" /><path d="M15 1v6H9z" fill="#333" /></svg>
        </div>
        <div className="flex h-[28px] min-w-0 flex-1 items-center gap-[7px] rounded-[2px] border border-[#a8a493] bg-white px-[6px] text-[14px]">
          <svg width="14" height="14" viewBox="0 0 14 14" aria-hidden="true"><circle cx="7" cy="7" r="6.300" fill="none" stroke="#555" /><path d="M7 6v5M7 3v1.500" stroke="#555" strokeWidth="1.500" /></svg>
          <a href="#address" className="min-w-0 flex-1 whitespace-nowrap text-[#7a7a7a]"><span className="text-black">127.0.0.1</span>:8008/projects/5a5763718dc0adcd89e28790</a>
          <svg width="16" height="16" viewBox="0 0 16 16" aria-label="Bookmark"><path d="M8 1l2 5h5l-4 3 1.500 6L8 11.500 3.500 15 5 9 1 6h5z" fill="none" stroke="#555" strokeWidth="1.300" /></svg>
        </div>
        <Extensions />
      </div>
      <div className="flex h-[30px] shrink-0 items-center border-b-2 border-[#aaa891] bg-[#f4f4dc] pl-[10px] pr-[13px] text-[14px] text-[#333]">
        <ul className="flex min-w-0 flex-1 items-center gap-[15px] overflow-hidden whitespace-nowrap">
          {BOOKMARKS.map(([ic, t]) => (
            <li key={t}>
              <a href="#bookmark" className="flex items-center gap-[8px]">
                {fav[ic]}
                <span className={ic === 'tinb' ? 'bg-gradient-to-r from-[#333] from-75% to-[#d8d8c6] bg-clip-text pr-[8px] text-transparent' : ''}>{t}</span>
              </a>
            </li>
          ))}
        </ul>
        <button aria-label="More bookmarks" className="text-[16px] font-bold">»</button>
        <span className="mx-[10px] h-[16px] w-px bg-[#b5b3a0]" />
        <a href="#other" className="flex items-center gap-[8px]">{fav.folder}Other bookmarks</a>
      </div>
    </>
  );
}

function Progress({ label, v, text, tone }: { label: string; v: number; text: string; tone: string }) {
  return (
    <div className="leading-[17px]">
      <div>{label}</div>
      <div className="mb-[5px] h-[15px] overflow-hidden rounded-[3px] bg-gradient-to-b from-[#e5e5e5] to-[#f5f5f5]">
        <div className={'h-full bg-gradient-to-b text-center leading-[15px] text-white ' + tone} style={{ width: v + '%' }}>{text}</div>
      </div>
    </div>
  );
}

function Chips({ v }: { v: [string, string, string] }) {
  const b = 'px-[15px] text-[12px] font-bold leading-[18px] ';
  return (
    <div className="flex shrink-0 gap-[10px]">
      <span className={b + 'bg-[#fdf7da] text-[#b8b080]'}>ФАКТ: {v[0]}</span>
      <span className={b + 'bg-[#5bc0de] text-white'}>ПЛАН: {v[1]}</span>
      <span className={b + 'bg-[#d9534f] text-white'}>ОТКЛ: {v[2]}</span>
    </div>
  );
}

const W = [42, 35, 35, 35, 35, 35, 42, 35, 35, 42, 42, 35];
const FLOORS: string[] = [
  '25 Маш.помещ.|_ _ _ _ _ 88 _ _ _ _ _ 86 5', '24 Тех.этаж|95 35 _ _ _ 60 _ _ _ _ _ 47 82', '23 Этаж|60 16 _ _ _ 56 _ _ _ _ _ 13 20',
  '22 Этаж|62 62 _ _ _ 36 _ _ _ _ _ 24 73', '21 Этаж|75 95 _ _ _ 71 _ _ _ _ _ 2 5', '20 Этаж|75 88 _ _ _ 1 _ _ _ _ _ 84 21',
  '19 Этаж|4 76 _ _ _ 3 _ _ _ 25 99 9 26', '18 Этаж|6 7 _ _ _ 93 _ _ _ 45 76 38 100', '17 Этаж|86 8 _ _ _ 23 _ _ _ 100 96 24 27',
  '16 Этаж|6 4 _ _ _ 91 _ _ _ 66 75 48 31', '15 Этаж|37 90 _ 64 41 36 _ _ _ 34 88 97 85', '14 Этаж|71 20 59 95 54 87 _ _ _ 32 12 9 73',
  '13 Этаж|6 53 46 75 6 51 _ _ _ 10 65 72 98', '12 Этаж|69 25 57 15 88 73 33 82 22 3 17 61 97', '11 Этаж|4 72 18 7 9 38 8 66 38 22 100 30 11',
  '10 Этаж|2 77 17 48 71 12 71 95 63 85 57 73 5', '9 Этаж|7 51 33 75 99 23 99 47 15 14 45 5 52', '8 Этаж|45 17 8 61 97 19 63 95 23 60 28 82 39',
  '7 Этаж|58 21 38 93 16 19 32 89 58 52 43 58 79', '6 Этаж|64 82 6 76 42 61 38 79 41 52 91 46 8', '5 Этаж|3 27 96 93 69 50 78 70 80 14 45 42 22',
  '4 Этаж|58 33 17 61 66 32 14 18 41 17 80 0 41', '3 Этаж|100 72 45 90 95 1 66 51 22 96 46 33 68', '2 Этаж|42 28 73 7 4 73 26 31 73 60 39 1 27',
  '1 Этаж|28 89 26 87 53 91 6 52 61 63 7 93 44', '-1 Подвал|98 23 9 8 7 95 89 48 60 20 22 43 85', '-2 Подвал|20 20 42 72 25 97 100 3 90 93 42 10 17',
];

function FloorTable() {
  const th = 'border border-[#ddd] px-[8px] ';
  const td = 'border-b border-r border-white pl-[10px] ';
  return (
    <table className="mt-[7px] w-[616px] table-fixed border-collapse whitespace-nowrap text-left">
      <colgroup><col className="w-[125px]" />{W.map((w, i) => <col key={i} style={{ width: w }} />)}<col className="w-[42px]" /></colgroup>
      <thead>
        <tr className="h-[36px]">
          <th rowSpan={2} className={th + 'border-b-2'}>Этаж/Название</th>
          <th colSpan={12} className={th + 'border-b-2'}>Секции</th>
          <th rowSpan={2} className={th + 'border-b-2'} />
        </tr>
        <tr className="h-[35px]">{SECT.map((s) => <th key={s} className="border border-b-2 border-[#ddd] text-center">{s}</th>)}</tr>
      </thead>
      <tbody>
        <tr className="h-[22px]">
          <td />
          {'21 52 86 89 15 51 43 79 7 96 97 43 ∑'.split(' ').map((v, i) => <td key={i} className={td + 'bg-[#f2f2f2]'}>{v}</td>)}
        </tr>
        {FLOORS.map((row) => {
          const [name, vals] = row.split('|');
          return (
            <tr key={name} className="h-[22px]">
              <th scope="row" className="pl-[10px] font-normal">№ {name}</th>
              {vals.split(' ').map((v, i) => <td key={i} className={td + (i === 12 ? 'bg-[#f2f2f2]' : v === '_' ? '' : 'bg-[#dedaf3]')}>{v === '_' ? '' : v}</td>)}
            </tr>
          );
        })}
      </tbody>
    </table>
  );
}

function ProjectPage() {
  return (
    <div className="flex min-h-0 flex-1 overflow-hidden bg-white font-['Liberation_Sans',sans-serif] text-[12px] leading-[17px] text-[#333]">
      <div className="flex min-w-0 flex-1 flex-col">
        <header className="flex h-[51px] shrink-0 items-center border-b border-black bg-gradient-to-b from-[#3c3c3c] to-[#222] pl-[15px]"><a href="#home" className="text-[18px] text-[#999]">ИНГРАД - проекты</a></header>
        <div className="flex min-h-0 flex-1">
          <nav aria-label="Разделы" className="w-[307px] shrink-0 border-r border-[#eee] bg-[#f5f5f5] pt-[20px] leading-[37px]">
            <a href="#projects" className="block bg-[#428bca] pl-[20px] text-white">Проекты</a>
            <a href="#builder" className="block pl-[20px] text-[#428bca]">Конструктор</a>
          </nav>
          <main className="min-w-0 flex-1 overflow-hidden px-[40px] pt-[19px]">
            <p><a href="#projects" className="text-[#428bca]">Проекты</a> / 12а Петра Алексеева</p>
            <section className="-mx-[15px] mt-[10px] grid grid-cols-12 [&>div]:px-[15px]">
              <div className="col-span-3 pt-[12px]"><p>Москва<br />12а Петра Алексеева</p><p className="mt-[10px] font-bold">СМР | Жилой дом<br />ИР Девелопмент</p></div>
              <div className="col-span-3">
                <Progress label="Факт" v={29} text="29% Факт" tone="from-[#f0ad4e] to-[#eb9316]" />
                <Progress label="План" v={37} text="37% План" tone="from-[#5bc0de] to-[#31b0d5]" />
                <Progress label="Отклонение" v={8} text="8%" tone="from-[#d9534f] to-[#c9302c]" />
              </div>
              <div className="col-span-2 col-start-9 pt-[12px]">
                <p className="flex h-[22px] items-center gap-[4px]">Статус: <span className="flex h-[21px] w-[21px] items-center justify-center rounded-full bg-[#0a8419] font-bold text-white">2</span></p>
                <p className="mt-[22px]">Этажи: 0-26<br />Секции: 12</p>
              </div>
              <div className="col-span-2 pt-[12px]"><p>Sзастр, м2: 5486.03<br />Sкв, м2: 67569.6</p><p className="mt-[10px]">Начало: 01/08/16<br />Окончание: 15/09/18</p></div>
            </section>
            <div className="mt-[18px] flex h-[18px] items-end">
              <h2 className="h-[17px] flex-1 bg-[#40318a] pl-[15px] text-white">1. Общестроительные работы</h2>
              <Chips v={['36%', '44%', '-8%']} />
            </div>
            <div className="mt-[16px] flex h-[24px] items-center">
              <span className="flex h-[24px] w-[40px] items-center justify-center bg-[#40318a] font-bold text-white">1.1.</span>
              <a href="#concrete" className="flex-1 pl-[13px] text-[#40318a]">Ж/б конструкции</a>
              <Chips v={['59%', '80%', '-21%']} />
            </div>
            <FloorTable />
          </main>
        </div>
      </div>
      <div className="flex w-[15px] shrink-0 flex-col items-center border-l border-[#e8e8e8] bg-[#f1f1f1] pb-[15px]">
        <svg width="8" height="15" viewBox="0 0 8 15" aria-hidden="true"><path d="M0 10h8L4 5z" fill="#a3a3a3" /></svg>
        <span className="min-h-0 w-[11px] grow-[9] basis-0 bg-[#c1c1c1]" />
        <span className="grow basis-0" />
      </div>
    </div>
  );
}

export default function App() {
  return (
    <div className="flex h-screen overflow-hidden font-['Noto_Sans',sans-serif]">
      <section aria-label="LibreOffice Calc" className="flex w-1/2 min-w-0 flex-col">
        <SystemBar title="Жилой дом.xlsx - LibreOffice Calc" />
        <CalcWindow />
      </section>
      <section aria-label="Chrome" className="flex w-1/2 min-w-0 flex-col">
        <SystemBar />
        <div className="flex min-h-0 flex-1">
          <Launcher />
          <div className="flex min-w-0 flex-1 flex-col"><BrowserChrome /><ProjectPage /></div>
        </div>
      </section>
    </div>
  );
}
